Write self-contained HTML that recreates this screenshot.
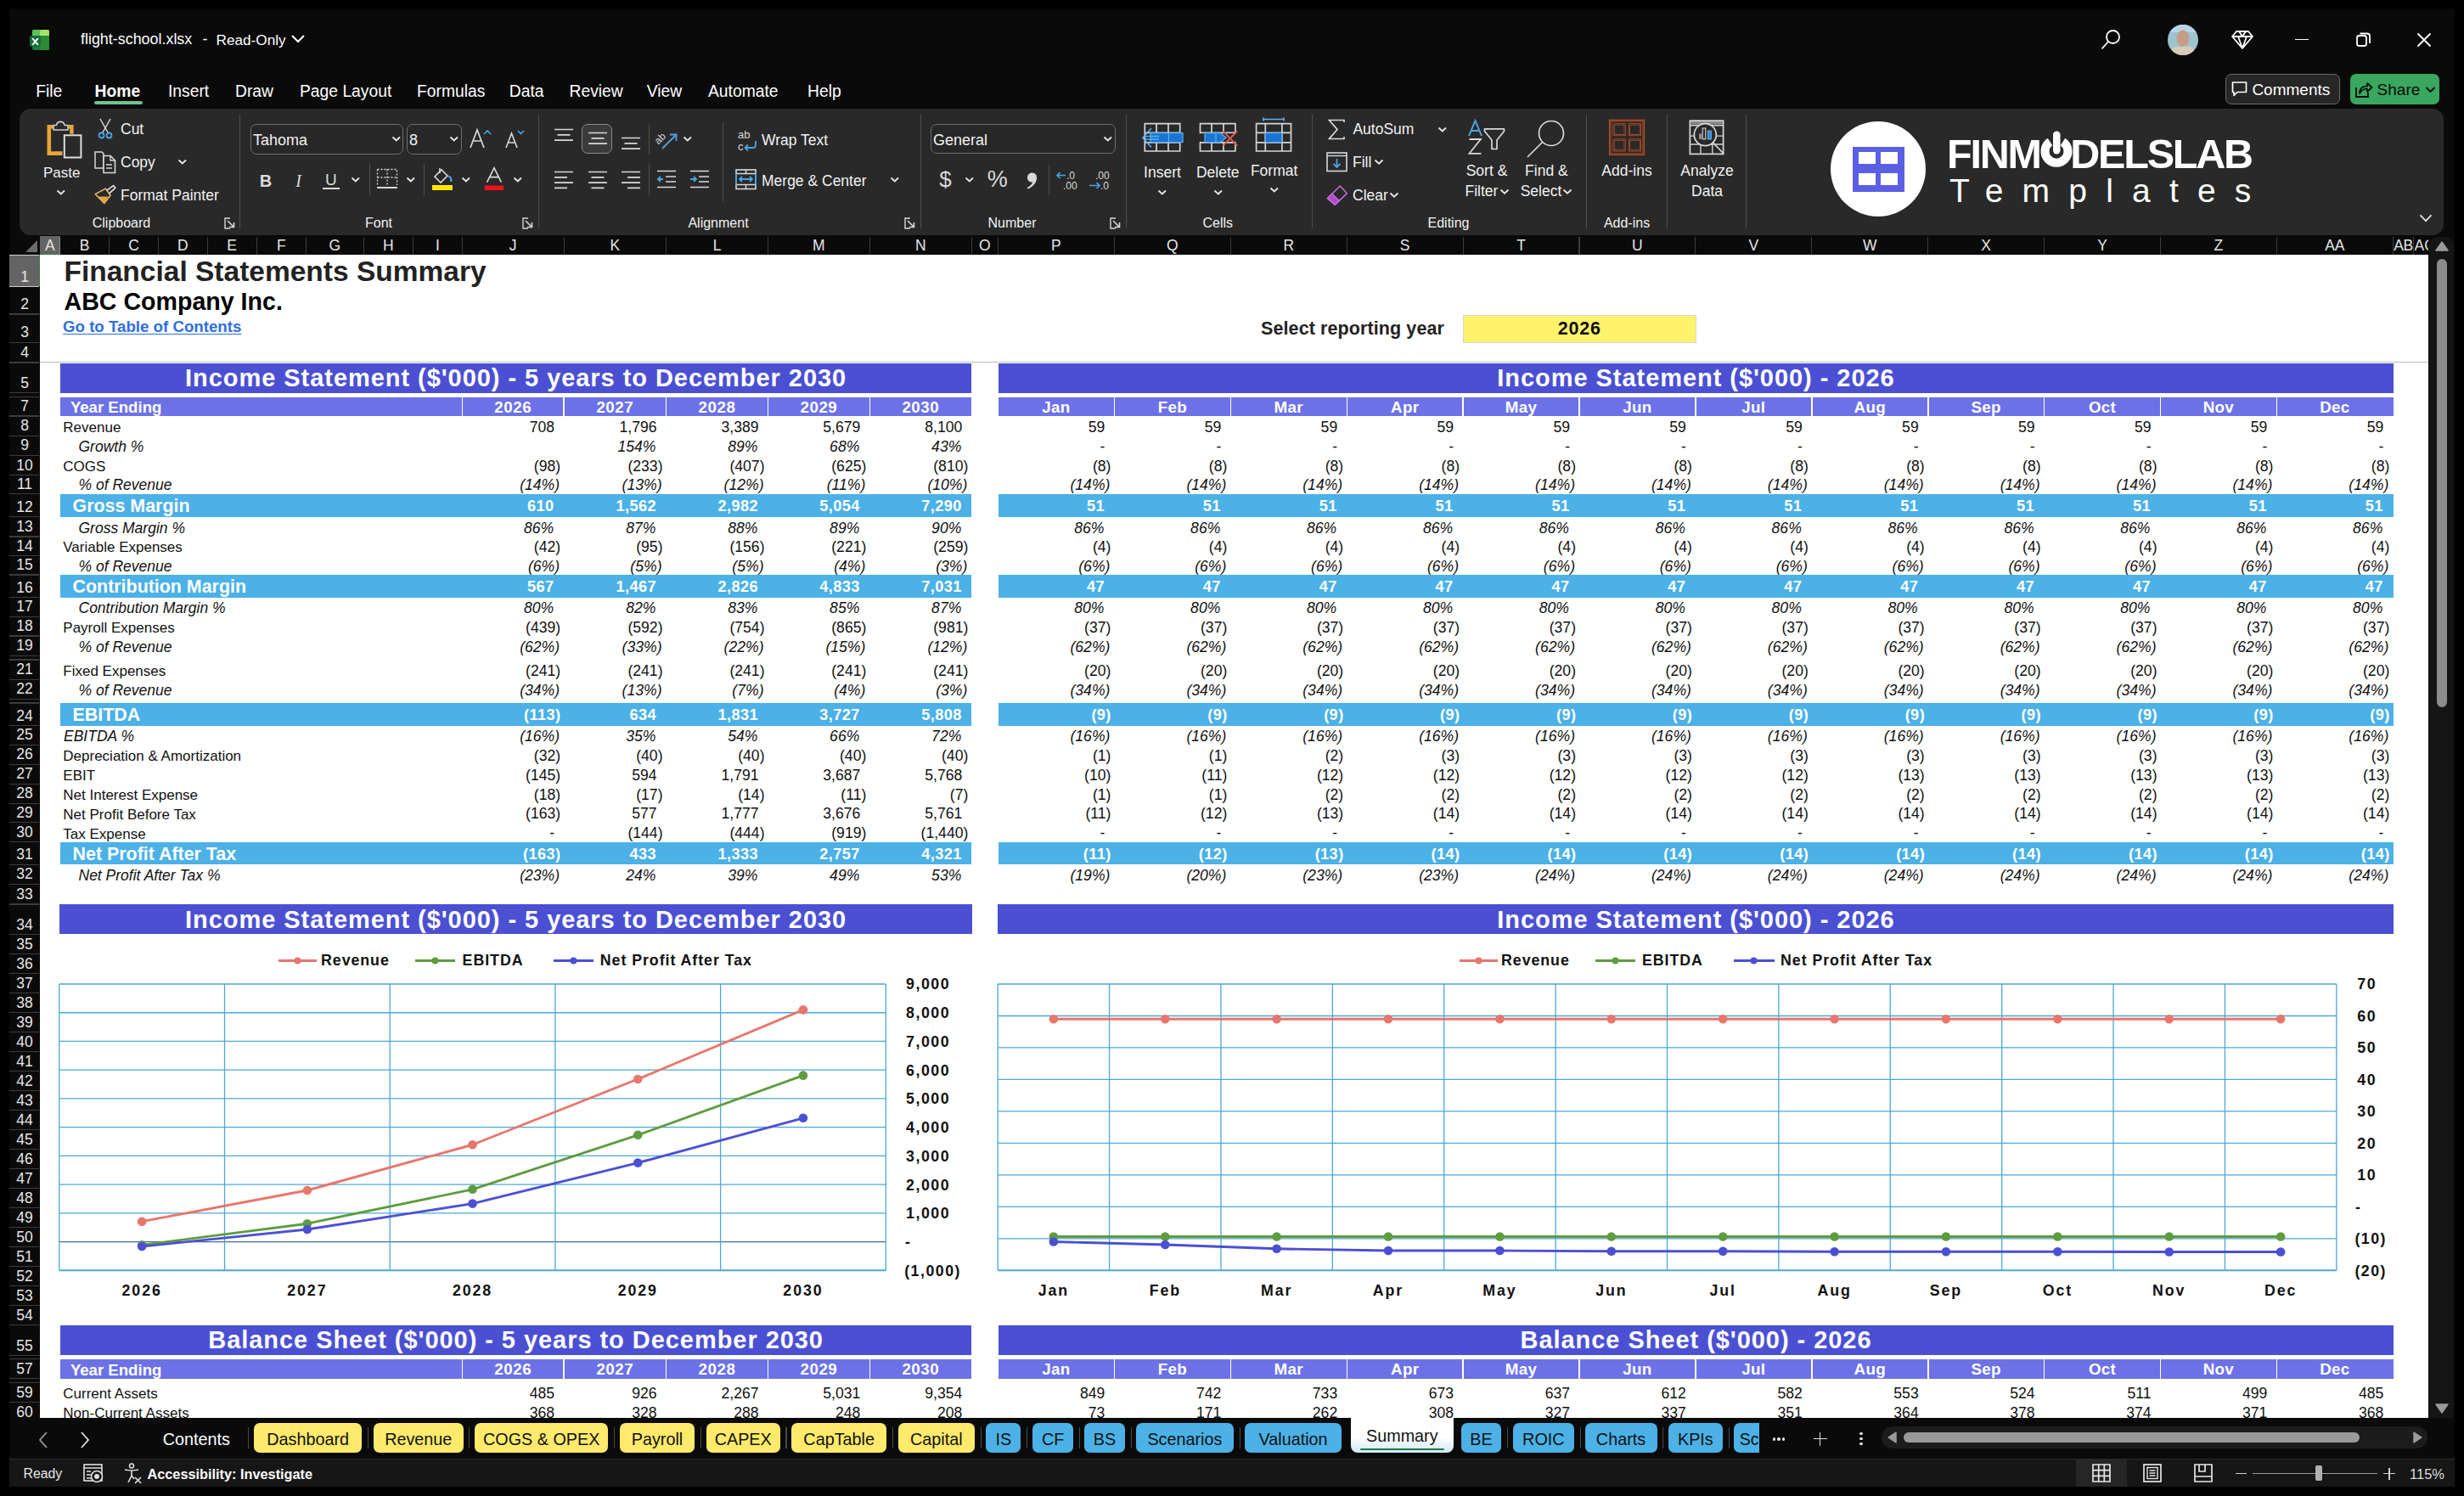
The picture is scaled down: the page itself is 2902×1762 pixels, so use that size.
<!DOCTYPE html><html><head><meta charset="utf-8"><style>
html,body{margin:0;padding:0;width:2902px;height:1762px;overflow:hidden;background:#000;}
.t{position:absolute;white-space:nowrap;line-height:1;font-family:"Liberation Sans",sans-serif;}
.r{position:absolute;}
</style></head><body>
<div class="r" style="left:11.00px;top:11.00px;width:2880.00px;height:1740.00px;background:#0a0a0a;"></div>
<svg class="r" style="left:33px;top:33px" width="28" height="28" viewBox="0 0 28 28">
<rect x="5" y="2" width="20" height="24" rx="2" fill="#1f7a3a"/>
<rect x="5" y="2" width="10" height="8" rx="1.5" fill="#5cc35a"/>
<rect x="14" y="2" width="11" height="8" rx="1.5" fill="#a7e06a"/>
<rect x="14" y="9" width="11" height="17" fill="#2b8a36"/>
<rect x="2" y="9" width="13" height="13" rx="2" fill="#166b3a"/>
<path d="M5.2 12.2 L11.8 19.8 M11.8 12.2 L5.2 19.8" stroke="#fff" stroke-width="2"/>
</svg>
<div class="t" style="top:38.35px;font-size:17.9px;color:#ffffff;left:95.00px;">flight-school.xlsx</div>
<div class="t" style="top:38.35px;font-size:17.9px;color:#ffffff;left:238.50px;">-</div>
<div class="t" style="top:38.94px;font-size:17.2px;color:#ffffff;left:254.50px;">Read-Only</div>
<svg class="r" style="left:342px;top:40px" width="18" height="12" viewBox="0 0 18 12"><path d="M2 2 L9 9 L16 2" stroke="#fff" stroke-width="2" fill="none"/></svg>
<svg class="r" style="left:2470px;top:30px" width="30" height="32" viewBox="0 0 30 32">
<circle cx="18.5" cy="13.5" r="7.5" stroke="#fff" stroke-width="1.8" fill="none"/>
<path d="M13 19 L5.5 27.5" stroke="#fff" stroke-width="1.8"/></svg>
<svg class="r" style="left:2552px;top:28px" width="38" height="38" viewBox="0 0 38 38">
<defs><clipPath id="av"><circle cx="19" cy="19" r="18"/></clipPath></defs>
<g clip-path="url(#av)"><rect width="38" height="38" fill="#9cc4cf"/><rect y="0" width="38" height="10" fill="#b8d3e6"/>
<ellipse cx="19" cy="17" rx="7.5" ry="9.5" fill="#c79c86"/><rect x="6" y="27" width="26" height="12" rx="5" fill="#d8cbb8"/></g></svg>
<svg class="r" style="left:2627px;top:34px" width="28" height="26" viewBox="0 0 28 26">
<path d="M7 3 H21 L26 9 L14 23 L2 9 Z M2 9 H26 M10 3 L14 9 L18 3 M9 9 L14 23 L19 9" stroke="#fff" stroke-width="1.8" fill="none" stroke-linejoin="round"/></svg>
<div class="r" style="left:2703.00px;top:45.50px;width:16.00px;height:1.80px;background:#ffffff;"></div>
<svg class="r" style="left:2773px;top:37px" width="22" height="20" viewBox="0 0 22 20">
<rect x="3" y="5" width="11" height="12" rx="2.5" stroke="#fff" stroke-width="1.8" fill="none"/>
<path d="M6.5 2.5 H15 A3 3 0 0 1 18 5.5 V14" stroke="#fff" stroke-width="1.8" fill="none"/></svg>
<svg class="r" style="left:2845px;top:37px" width="20" height="20" viewBox="0 0 20 20">
<path d="M2.5 2.5 L17.5 17.5 M17.5 2.5 L2.5 17.5" stroke="#fff" stroke-width="1.8"/></svg>
<div class="t" style="top:98.16px;font-size:19.3px;color:#ffffff;left:42.20px;">File</div>
<div class="t" style="top:98.16px;font-size:19.3px;color:#ffffff;font-weight:bold;left:111.60px;">Home</div>
<div class="t" style="top:98.16px;font-size:19.3px;color:#ffffff;left:198.00px;">Insert</div>
<div class="t" style="top:98.16px;font-size:19.3px;color:#ffffff;left:277.00px;">Draw</div>
<div class="t" style="top:98.16px;font-size:19.3px;color:#ffffff;left:353.00px;">Page Layout</div>
<div class="t" style="top:98.16px;font-size:19.3px;color:#ffffff;left:491.00px;">Formulas</div>
<div class="t" style="top:98.16px;font-size:19.3px;color:#ffffff;left:599.80px;">Data</div>
<div class="t" style="top:98.16px;font-size:19.3px;color:#ffffff;left:670.50px;">Review</div>
<div class="t" style="top:98.16px;font-size:19.3px;color:#ffffff;left:761.80px;">View</div>
<div class="t" style="top:98.16px;font-size:19.3px;color:#ffffff;left:834.00px;">Automate</div>
<div class="t" style="top:98.16px;font-size:19.3px;color:#ffffff;left:951.00px;">Help</div>
<div class="r" style="left:111.00px;top:119.00px;width:57.00px;height:4.00px;background:#6fc38f;border-radius:2px;"></div>
<div class="r" style="left:2621.30px;top:87.10px;width:134.70px;height:35.70px;background:#262626;border:1.3px solid #6a6a6a;border-radius:7px;box-sizing:border-box;"></div>
<svg class="r" style="left:2627px;top:95px" width="22" height="20" viewBox="0 0 22 20">
<path d="M2.5 2 H18.5 V13.5 H8 L4 17.5 V13.5 H2.5 Z" stroke="#fff" stroke-width="1.7" fill="none" stroke-linejoin="round"/></svg>
<div class="t" style="top:96.32px;font-size:19px;color:#ffffff;left:2652.40px;">Comments</div>
<div class="r" style="left:2768.10px;top:87.10px;width:104.70px;height:35.70px;background:#3aa75e;border-radius:7px;"></div>
<svg class="r" style="left:2772px;top:94px" width="24" height="22" viewBox="0 0 24 22">
<path d="M3 9 V20 H17 V15" stroke="#0a0a0a" stroke-width="1.8" fill="none"/>
<path d="M7 16 C7 10 11 7.5 16 7.5 V4 L21.5 9 L16 14 V10.5 C12 10.5 9.5 12 7 16 Z" stroke="#0a0a0a" stroke-width="1.7" fill="none" stroke-linejoin="round"/></svg>
<div class="t" style="top:96.32px;font-size:19px;color:#0a0a0a;left:2799.60px;">Share</div>
<svg class="r" style="left:2856px;top:101px" width="13" height="9" viewBox="0 0 13 9"><path d="M1.5 2 L6.5 7 L11.5 2" stroke="#0a0a0a" stroke-width="1.8" fill="none"/></svg>
<div class="r" style="left:23.30px;top:128.10px;width:2855.20px;height:148.90px;background:#292929;border-radius:13px;"></div>
<svg class="r" style="left:52px;top:138px" width="46" height="50" viewBox="0 0 46 50">
<path d="M10.5 11.2 H5.8 V42.6 H21.5" stroke="#e8a33a" stroke-width="4.6" fill="none"/>
<path d="M28.5 11.2 H32.4 V19.8" stroke="#e8a33a" stroke-width="4.4" fill="none"/>
<path d="M11 15 V9.5 H14.5 A4.8 4.8 0 0 1 24 9.5 H28 V15 Z" stroke="#cfcfcf" stroke-width="1.6" fill="#292929" stroke-linejoin="round"/>
<rect x="23.8" y="21.3" width="19.6" height="26.2" stroke="#dcdcdc" stroke-width="2" fill="#292929"/></svg>
<div class="t" style="top:194.91px;font-size:17px;color:#f2f2f2;left:51.00px;">Paste</div>
<svg class="r" style="left:65.8px;top:222.7px" width="11.5" height="7.7" viewBox="0 0 11.5 7.7"><path d="M1.5 1.5 L5.8 5.5 L10.0 1.5" stroke="#e6e6e6" stroke-width="1.9" fill="none"/></svg>
<svg class="r" style="left:114px;top:139px" width="20" height="26" viewBox="0 0 20 26">
<path d="M4 1 L13 17 M16 1 L7 17" stroke="#d9d9d9" stroke-width="1.5"/>
<circle cx="5.5" cy="20.5" r="3" stroke="#4aa3e0" stroke-width="1.8" fill="none"/>
<circle cx="14.5" cy="20.5" r="3" stroke="#4aa3e0" stroke-width="1.8" fill="none"/></svg>
<div class="t" style="top:144.19px;font-size:17.5px;color:#f2f2f2;left:142.00px;">Cut</div>
<svg class="r" style="left:111px;top:178px" width="27" height="27" viewBox="0 0 27 27">
<path d="M1 1 H9 L11 3 V20 H1 Z" stroke="#d9d9d9" stroke-width="1.5" fill="none"/>
<path d="M11 5.5 H19 L24.5 11 V25.5 H11 Z" stroke="#d9d9d9" stroke-width="1.6" fill="#292929"/>
<path d="M19 5.5 V11 H24.5 M14 16 H21 M14 20 H21" stroke="#d9d9d9" stroke-width="1.3" fill="none"/></svg>
<div class="t" style="top:182.69px;font-size:17.5px;color:#f2f2f2;left:142.00px;">Copy</div>
<svg class="r" style="left:209.2px;top:187.2px" width="11.5" height="7.7" viewBox="0 0 11.5 7.7"><path d="M1.5 1.5 L5.8 5.5 L10.0 1.5" stroke="#e6e6e6" stroke-width="1.9" fill="none"/></svg>
<svg class="r" style="left:110px;top:216px" width="28" height="26" viewBox="0 0 28 26">
<path d="M2.2 12.6 L14.4 6.1 L20.1 14.2 L12.8 23.6 Z" stroke="#e8c070" stroke-width="1.5" fill="none" stroke-linejoin="round"/>
<path d="M6 15.5 L17.5 15.5 L12.8 23.6 Z" fill="#e8a33a"/>
<path d="M15.5 8.5 L23.5 2.6 L25.8 5.4 L18.4 12" stroke="#d9d9d9" stroke-width="1.7" fill="none" stroke-linejoin="round"/></svg>
<div class="t" style="top:222.49px;font-size:17.5px;color:#f2f2f2;left:142.00px;">Format Painter</div>
<div class="t" style="top:254.56px;font-size:16px;color:#f2f2f2;left:-1357.00px;width:3000px;text-align:center;">Clipboard</div>
<svg class="r" style="left:264px;top:256px" width="14" height="14" viewBox="0 0 14 14">
<path d="M1 7 V1 H7" stroke="#d8d8d8" stroke-width="1.4" fill="none"/><path d="M1 1 V13 H13 V7" stroke="none" fill="none"/>
<path d="M4 4 L11.5 11.5 M6 11.5 H11.5 V6" stroke="#d8d8d8" stroke-width="1.6" fill="none"/><path d="M1 7 V13 H7" stroke="#d8d8d8" stroke-width="1.4" fill="none"/></svg>
<div class="r" style="left:282.00px;top:135.00px;width:1.00px;height:134.00px;background:#4f4f4f;"></div>
<div class="r" style="left:295.20px;top:146.00px;width:180.30px;height:35.80px;background:#272727;border:1.3px solid #6e6e6e;border-radius:7px;box-sizing:border-box;"></div>
<div class="t" style="top:155.76px;font-size:18px;color:#f2f2f2;left:298.00px;">Tahoma</div>
<svg class="r" style="left:461.2px;top:160.2px" width="11.5" height="7.7" viewBox="0 0 11.5 7.7"><path d="M1.5 1.5 L5.8 5.5 L10.0 1.5" stroke="#e6e6e6" stroke-width="1.9" fill="none"/></svg>
<div class="r" style="left:479.00px;top:146.00px;width:64.80px;height:35.80px;background:#272727;border:1.3px solid #6e6e6e;border-radius:7px;box-sizing:border-box;"></div>
<div class="t" style="top:155.76px;font-size:18px;color:#f2f2f2;left:482.00px;">8</div>
<svg class="r" style="left:529.2px;top:160.2px" width="11.5" height="7.7" viewBox="0 0 11.5 7.7"><path d="M1.5 1.5 L5.8 5.5 L10.0 1.5" stroke="#e6e6e6" stroke-width="1.9" fill="none"/></svg>
<svg class="r" style="left:552px;top:150px" width="28" height="26" viewBox="0 0 28 26">
<path d="M2 24 L10 3 L18 24 M5 16 H15" stroke="#d9d9d9" stroke-width="1.7" fill="none"/>
<path d="M18 8 L22 4 L26 8" stroke="#4aa3e0" stroke-width="1.7" fill="none"/></svg>
<svg class="r" style="left:594px;top:150px" width="26" height="26" viewBox="0 0 26 26">
<path d="M2 24 L8.5 7 L15 24 M4.5 18 H12.5" stroke="#d9d9d9" stroke-width="1.6" fill="none"/>
<path d="M16 4 L19.5 7.5 L23 4" stroke="#4aa3e0" stroke-width="1.7" fill="none"/></svg>
<div class="t" style="top:203.07px;font-size:20px;color:#d9d9d9;font-weight:bold;left:-1187.00px;width:3000px;text-align:center;">B</div>
<div class="t" style="top:203.07px;font-size:20px;color:#d9d9d9;font-style:italic;left:-1148.50px;width:3000px;text-align:center;font-family:'Liberation Serif',serif;">I</div>
<div class="t" style="top:201.92px;font-size:19px;color:#d9d9d9;left:-1110.20px;width:3000px;text-align:center;">U</div>
<div class="r" style="left:380.00px;top:221.00px;width:20.00px;height:1.70px;background:#d9d9d9;"></div>
<svg class="r" style="left:413.2px;top:208.2px" width="11.5" height="7.7" viewBox="0 0 11.5 7.7"><path d="M1.5 1.5 L5.8 5.5 L10.0 1.5" stroke="#e6e6e6" stroke-width="1.9" fill="none"/></svg>
<div class="r" style="left:434.50px;top:193.00px;width:1.00px;height:37.00px;background:#4f4f4f;"></div>
<svg class="r" style="left:443px;top:198px" width="26" height="26" viewBox="0 0 26 26">
<path d="M1.5 1.5 H24.5 V20 M1.5 1.5 V20 M13 1.5 V20 M1.5 11 H24.5" stroke="#d9d9d9" stroke-width="1.3" stroke-dasharray="2 2" fill="none"/>
<path d="M1 23 H25" stroke="#d9d9d9" stroke-width="2"/></svg>
<svg class="r" style="left:478.2px;top:208.2px" width="11.5" height="7.7" viewBox="0 0 11.5 7.7"><path d="M1.5 1.5 L5.8 5.5 L10.0 1.5" stroke="#e6e6e6" stroke-width="1.9" fill="none"/></svg>
<div class="r" style="left:499.30px;top:193.00px;width:1.00px;height:37.00px;background:#4f4f4f;"></div>
<svg class="r" style="left:507px;top:196px" width="28" height="29" viewBox="0 0 28 29">
<path d="M5 12 L13 4 L20 11 L12 19 Z" stroke="#d9d9d9" stroke-width="1.6" fill="none"/>
<path d="M11 2 V8" stroke="#d9d9d9" stroke-width="1.6"/>
<path d="M20 11 C24 12 25 15 24 18" stroke="#4aa3e0" stroke-width="2.2" fill="none"/>
<rect x="2" y="22" width="24" height="6" fill="#ffe600"/></svg>
<svg class="r" style="left:543.2px;top:208.2px" width="11.5" height="7.7" viewBox="0 0 11.5 7.7"><path d="M1.5 1.5 L5.8 5.5 L10.0 1.5" stroke="#e6e6e6" stroke-width="1.9" fill="none"/></svg>
<svg class="r" style="left:568px;top:196px" width="28" height="29" viewBox="0 0 28 31">
<path d="M5 20 L14 2 L23 20 M8.5 13.5 H19.5" stroke="#d9d9d9" stroke-width="1.7" fill="none"/>
<rect x="2" y="24" width="24" height="6" fill="#e8141b"/></svg>
<svg class="r" style="left:604.2px;top:208.2px" width="11.5" height="7.7" viewBox="0 0 11.5 7.7"><path d="M1.5 1.5 L5.8 5.5 L10.0 1.5" stroke="#e6e6e6" stroke-width="1.9" fill="none"/></svg>
<div class="t" style="top:254.56px;font-size:16px;color:#f2f2f2;left:-1054.00px;width:3000px;text-align:center;">Font</div>
<svg class="r" style="left:615px;top:256px" width="14" height="14" viewBox="0 0 14 14">
<path d="M1 7 V1 H7" stroke="#d8d8d8" stroke-width="1.4" fill="none"/><path d="M1 1 V13 H13 V7" stroke="none" fill="none"/>
<path d="M4 4 L11.5 11.5 M6 11.5 H11.5 V6" stroke="#d8d8d8" stroke-width="1.6" fill="none"/><path d="M1 7 V13 H7" stroke="#d8d8d8" stroke-width="1.4" fill="none"/></svg>
<div class="r" style="left:633.60px;top:135.00px;width:1.00px;height:134.00px;background:#4f4f4f;"></div>
<svg class="r" style="left:652px;top:151px" width="24" height="17" viewBox="0 0 24 17"><path d="M1.0 1.5 H23.0 M4.5 7.8 H19.5 M1.0 14.1 H23.0 " stroke="#d9d9d9" stroke-width="1.7" fill="none"/></svg>
<div class="r" style="left:685.30px;top:146.20px;width:35.30px;height:35.30px;background:#3b3b3b;border:1.3px solid #8a8a8a;border-radius:7px;box-sizing:border-box;"></div>
<svg class="r" style="left:692px;top:155px" width="24" height="17" viewBox="0 0 24 17"><path d="M1.0 1.5 H23.0 M4.5 7.8 H19.5 M1.0 14.1 H23.0 " stroke="#d9d9d9" stroke-width="1.7" fill="none"/></svg>
<svg class="r" style="left:731px;top:161px" width="24" height="17" viewBox="0 0 24 17"><path d="M1.0 1.5 H23.0 M4.5 7.8 H19.5 M1.0 14.1 H23.0 " stroke="#d9d9d9" stroke-width="1.7" fill="none"/></svg>
<div class="r" style="left:763.50px;top:146.00px;width:1.00px;height:36.00px;background:#4f4f4f;"></div>
<svg class="r" style="left:771px;top:151px" width="30" height="26" viewBox="0 0 30 26">
<text x="0" y="15" transform="rotate(-45 8 12)" font-family="Liberation Sans" font-size="12" fill="#d9d9d9">ab</text>
<path d="M9 24 L25 8 M18 7.5 H25.5 V15" stroke="#4aa3e0" stroke-width="1.8" fill="none"/></svg>
<svg class="r" style="left:804.2px;top:160.2px" width="11.5" height="7.7" viewBox="0 0 11.5 7.7"><path d="M1.5 1.5 L5.8 5.5 L10.0 1.5" stroke="#e6e6e6" stroke-width="1.9" fill="none"/></svg>
<div class="r" style="left:851.20px;top:144.00px;width:1.00px;height:93.00px;background:#4f4f4f;"></div>
<svg class="r" style="left:868px;top:151px" width="26" height="30" viewBox="0 0 26 30">
<text x="1" y="12" font-family="Liberation Sans" font-size="13" fill="#d9d9d9">ab</text>
<text x="1" y="26" font-family="Liberation Sans" font-size="13" fill="#d9d9d9">c</text>
<path d="M22 15 V20 A3 3 0 0 1 19 23 H10 M13 19.5 L9.5 23 L13 26.5" stroke="#4aa3e0" stroke-width="1.8" fill="none"/></svg>
<div class="t" style="top:156.69px;font-size:17.5px;color:#f2f2f2;left:897.00px;">Wrap Text</div>
<svg class="r" style="left:652px;top:201px" width="24" height="23" viewBox="0 0 24 23"><path d="M1.0 1.5 H23.0 M1.0 7.8 H16.0 M1.0 14.1 H23.0 M1.0 20.4 H16.0 " stroke="#d9d9d9" stroke-width="1.7" fill="none"/></svg>
<svg class="r" style="left:692px;top:201px" width="24" height="23" viewBox="0 0 24 23"><path d="M1.0 1.5 H23.0 M4.5 7.8 H19.5 M1.0 14.1 H23.0 M4.5 20.4 H19.5 " stroke="#d9d9d9" stroke-width="1.7" fill="none"/></svg>
<svg class="r" style="left:731px;top:201px" width="24" height="23" viewBox="0 0 24 23"><path d="M1.0 1.5 H23.0 M8.0 7.8 H23.0 M1.0 14.1 H23.0 M8.0 20.4 H23.0 " stroke="#d9d9d9" stroke-width="1.7" fill="none"/></svg>
<div class="r" style="left:763.50px;top:193.00px;width:1.00px;height:37.00px;background:#4f4f4f;"></div>
<svg class="r" style="left:773px;top:200px" width="25" height="22" viewBox="0 0 25 22">
<path d="M1 1.5 H23 M11 8 H23 M11 14 H23 M1 20.5 H23" stroke="#d9d9d9" stroke-width="1.7"/>
<path d="M8 11 H2 M5 8 L2 11 L5 14" stroke="#4aa3e0" stroke-width="1.8" fill="none"/></svg>
<svg class="r" style="left:812px;top:200px" width="25" height="22" viewBox="0 0 25 22">
<path d="M1 1.5 H23 M11 8 H23 M11 14 H23 M1 20.5 H23" stroke="#d9d9d9" stroke-width="1.7"/>
<path d="M1 11 H8 M5 8 L8 11 L5 14" stroke="#4aa3e0" stroke-width="1.8" fill="none"/></svg>
<svg class="r" style="left:866px;top:199px" width="25" height="25" viewBox="0 0 25 25">
<rect x="1" y="1" width="23" height="22.5" stroke="#d9d9d9" stroke-width="1.6" fill="none"/>
<path d="M1 5.5 H24 M1 18.5 H24 M12.5 1 V5.5 M12.5 18.5 V23.5" stroke="#d9d9d9" stroke-width="1.5"/>
<path d="M1 5.5 V18.5 M24 5.5 V18.5" stroke="#4aa3e0" stroke-width="2"/>
<path d="M5 12 H20 M8 9 L5 12 L8 15 M17 9 L20 12 L17 15" stroke="#4aa3e0" stroke-width="1.8" fill="none"/></svg>
<div class="t" style="top:204.69px;font-size:17.5px;color:#f2f2f2;left:897.00px;">Merge &amp; Center</div>
<svg class="r" style="left:1048.0px;top:208.2px" width="11.5" height="7.7" viewBox="0 0 11.5 7.7"><path d="M1.5 1.5 L5.8 5.5 L10.0 1.5" stroke="#e6e6e6" stroke-width="1.9" fill="none"/></svg>
<div class="t" style="top:254.56px;font-size:16px;color:#f2f2f2;left:-654.00px;width:3000px;text-align:center;">Alignment</div>
<svg class="r" style="left:1065px;top:256px" width="14" height="14" viewBox="0 0 14 14">
<path d="M1 7 V1 H7" stroke="#d8d8d8" stroke-width="1.4" fill="none"/><path d="M1 1 V13 H13 V7" stroke="none" fill="none"/>
<path d="M4 4 L11.5 11.5 M6 11.5 H11.5 V6" stroke="#d8d8d8" stroke-width="1.6" fill="none"/><path d="M1 7 V13 H7" stroke="#d8d8d8" stroke-width="1.4" fill="none"/></svg>
<div class="r" style="left:1083.50px;top:135.00px;width:1.00px;height:134.00px;background:#4f4f4f;"></div>
<div class="r" style="left:1096.20px;top:146.20px;width:217.40px;height:35.30px;background:#272727;border:1.3px solid #6e6e6e;border-radius:7px;box-sizing:border-box;"></div>
<div class="t" style="top:155.76px;font-size:18px;color:#f2f2f2;left:1099.00px;">General</div>
<svg class="r" style="left:1299.2px;top:160.2px" width="11.5" height="7.7" viewBox="0 0 11.5 7.7"><path d="M1.5 1.5 L5.8 5.5 L10.0 1.5" stroke="#e6e6e6" stroke-width="1.9" fill="none"/></svg>
<div class="t" style="top:198.49px;font-size:26px;color:#d9d9d9;left:-386.60px;width:3000px;text-align:center;">$</div>
<svg class="r" style="left:1136.2px;top:208.2px" width="11.5" height="7.7" viewBox="0 0 11.5 7.7"><path d="M1.5 1.5 L5.8 5.5 L10.0 1.5" stroke="#e6e6e6" stroke-width="1.9" fill="none"/></svg>
<div class="t" style="top:198.14px;font-size:27px;color:#d9d9d9;left:-325.20px;width:3000px;text-align:center;">%</div>
<svg class="r" style="left:1206px;top:202px" width="18" height="22" viewBox="0 0 18 22"><path d="M9.5 1.5 C13.5 1.5 15.5 4.5 15 8.5 C14.3 14 10 18.5 4.5 20.5 L3.8 19 C7.5 17 9.8 14.5 10.3 12.5 C6.5 12.8 4 10.5 4 7.2 C4 3.8 6.3 1.5 9.5 1.5 Z" fill="#d9d9d9"/></svg>
<div class="r" style="left:1235.40px;top:194.00px;width:1.00px;height:36.00px;background:#4f4f4f;"></div>
<svg class="r" style="left:1243px;top:200px" width="27" height="25" viewBox="0 0 27 25">
<text x="13" y="11" font-family="Liberation Sans" font-size="12" fill="#d9d9d9">.0</text>
<text x="9" y="23" font-family="Liberation Sans" font-size="12" fill="#d9d9d9">.00</text>
<path d="M12 6.5 H2 M5.5 3 L2 6.5 L5.5 10" stroke="#4aa3e0" stroke-width="1.7" fill="none"/></svg>
<svg class="r" style="left:1282px;top:200px" width="28" height="25" viewBox="0 0 28 25">
<text x="8" y="11" font-family="Liberation Sans" font-size="12" fill="#d9d9d9">.00</text>
<text x="14" y="23" font-family="Liberation Sans" font-size="12" fill="#d9d9d9">.0</text>
<path d="M1 18.5 H13 M9.5 15 L13 18.5 L9.5 22" stroke="#4aa3e0" stroke-width="1.7" fill="none"/></svg>
<div class="t" style="top:254.56px;font-size:16px;color:#f2f2f2;left:-308.00px;width:3000px;text-align:center;">Number</div>
<svg class="r" style="left:1307px;top:256px" width="14" height="14" viewBox="0 0 14 14">
<path d="M1 7 V1 H7" stroke="#d8d8d8" stroke-width="1.4" fill="none"/><path d="M1 1 V13 H13 V7" stroke="none" fill="none"/>
<path d="M4 4 L11.5 11.5 M6 11.5 H11.5 V6" stroke="#d8d8d8" stroke-width="1.6" fill="none"/><path d="M1 7 V13 H7" stroke="#d8d8d8" stroke-width="1.4" fill="none"/></svg>
<div class="r" style="left:1325.50px;top:135.00px;width:1.00px;height:134.00px;background:#4f4f4f;"></div>
<svg class="r" style="left:1340px;top:138px" width="190" height="44" viewBox="1340 138 190 44">
<path d="M1348.3 145.7 H1389.7 V178 H1348.3 Z M1348.3 156.3 H1389.7 M1348.3 167.8 H1389.7 M1362 145.7 V178 M1376 145.7 V178" stroke="#d6d6d6" stroke-width="1.7" fill="none"/>
<rect x="1355" y="156.6" width="38" height="11" fill="#1b74d2" stroke="#5cb2f2" stroke-width="1.2"/>
<path d="M1376.5 156.6 V167.6" stroke="#5cb2f2" stroke-width="1.2"/>
<path d="M1365 160.5 H1349 M1365 164 H1349" stroke="#5cb2f2" stroke-width="1.3"/>
<path d="M1356 151 L1346 162.2 L1356 173.5" stroke="#5cb2f2" stroke-width="1.7" fill="none"/>
<path d="M1413.5 145.7 H1454.9 V178 H1413.5 Z M1413.5 156.3 H1454.9 M1413.5 167.8 H1454.9 M1427 145.7 V178 M1441 145.7 V178" stroke="#d6d6d6" stroke-width="1.7" fill="none"/>
<rect x="1410" y="157.3" width="50" height="9.6" fill="#292929"/>
<path d="M1419 156.6 H1437 L1444.2 162.2 L1437 167.6 H1419 Z" fill="#1b74d2" stroke="#5cb2f2" stroke-width="1.2"/>
<path d="M1432 156.6 V167.6" stroke="#5cb2f2" stroke-width="1.2"/>
<path d="M1440.5 154.5 L1457 171.5 M1457 154.5 L1440.5 171.5" stroke="#e05a52" stroke-width="1.8"/>
<path d="M1488 140.5 H1512 M1488 138.5 V142.5 M1512 138.5 V142.5" stroke="#5cb2f2" stroke-width="1.7"/>
<path d="M1479.6 145.7 H1520.5 V178 H1479.6 Z M1479.6 156.3 H1520.5 M1479.6 167.8 H1520.5 M1490.3 145.7 V178 M1509.9 145.7 V178" stroke="#d6d6d6" stroke-width="1.7" fill="none"/>
<rect x="1490.3" y="156.6" width="19.6" height="11" fill="#1b74d2" stroke="#5cb2f2" stroke-width="1.2"/></svg>
<div class="t" style="top:195.19px;font-size:17.5px;color:#f2f2f2;left:-131.00px;width:3000px;text-align:center;">Insert</div>
<svg class="r" style="left:1363.2px;top:222.5px" width="11.5" height="7.7" viewBox="0 0 11.5 7.7"><path d="M1.5 1.5 L5.8 5.5 L10.0 1.5" stroke="#e6e6e6" stroke-width="1.9" fill="none"/></svg>
<div class="t" style="top:195.19px;font-size:17.5px;color:#f2f2f2;left:-65.80px;width:3000px;text-align:center;">Delete</div>
<svg class="r" style="left:1428.5px;top:222.5px" width="11.5" height="7.7" viewBox="0 0 11.5 7.7"><path d="M1.5 1.5 L5.8 5.5 L10.0 1.5" stroke="#e6e6e6" stroke-width="1.9" fill="none"/></svg>
<div class="t" style="top:193.19px;font-size:17.5px;color:#f2f2f2;left:0.60px;width:3000px;text-align:center;">Format</div>
<svg class="r" style="left:1494.8px;top:220.2px" width="11.5" height="7.7" viewBox="0 0 11.5 7.7"><path d="M1.5 1.5 L5.8 5.5 L10.0 1.5" stroke="#e6e6e6" stroke-width="1.9" fill="none"/></svg>
<div class="t" style="top:254.56px;font-size:16px;color:#f2f2f2;left:-65.80px;width:3000px;text-align:center;">Cells</div>
<div class="r" style="left:1544.80px;top:135.00px;width:1.00px;height:134.00px;background:#4f4f4f;"></div>
<svg class="r" style="left:1563px;top:140px" width="24" height="25" viewBox="0 0 24 25">
<path d="M20 4 V1.5 H2.5 L12 12.5 L2.5 23.5 H20 V21" stroke="#d9d9d9" stroke-width="1.7" fill="none"/></svg>
<div class="t" style="top:144.19px;font-size:17.5px;color:#f2f2f2;left:1593.40px;">AutoSum</div>
<svg class="r" style="left:1693.2px;top:148.8px" width="11.5" height="7.7" viewBox="0 0 11.5 7.7"><path d="M1.5 1.5 L5.8 5.5 L10.0 1.5" stroke="#e6e6e6" stroke-width="1.9" fill="none"/></svg>
<svg class="r" style="left:1562px;top:179px" width="26" height="24" viewBox="0 0 26 24">
<rect x="1" y="1" width="23" height="21.5" stroke="#d9d9d9" stroke-width="1.6" fill="none"/><path d="M1 4.5 H24" stroke="#d9d9d9" stroke-width="1.4"/>
<path d="M12.5 8 V18 M8.5 14 L12.5 18 L16.5 14" stroke="#4aa3e0" stroke-width="1.8" fill="none"/></svg>
<div class="t" style="top:183.19px;font-size:17.5px;color:#f2f2f2;left:1593.00px;">Fill</div>
<svg class="r" style="left:1618.0px;top:187.4px" width="12" height="8.0" viewBox="0 0 12 8.0"><path d="M1.5 1.5 L6.0 5.8 L10.5 1.5" stroke="#e6e6e6" stroke-width="1.9" fill="none"/></svg>
<svg class="r" style="left:1558px;top:214px" width="34" height="32" viewBox="1558 214 34 32">
<path d="M1563.5 233.5 L1578.3 219 L1586.3 227.8 L1572.2 241.2 Z" stroke="#c56ad8" stroke-width="1.6" fill="none" stroke-linejoin="round"/>
<path d="M1563.5 233.5 L1568.8 228.3 L1577.2 236.5 L1572.2 241.2 Z" fill="#b04ccc" stroke="#c56ad8" stroke-width="1.6" stroke-linejoin="round"/></svg>
<div class="t" style="top:221.69px;font-size:17.5px;color:#f2f2f2;left:1593.00px;">Clear</div>
<svg class="r" style="left:1636.0px;top:226.0px" width="12" height="8.0" viewBox="0 0 12 8.0"><path d="M1.5 1.5 L6.0 5.8 L10.5 1.5" stroke="#e6e6e6" stroke-width="1.9" fill="none"/></svg>
<svg class="r" style="left:1725px;top:138px" width="52" height="46" viewBox="1725 138 52 46">
<path d="M1730 160.2 L1737.5 142 L1745 160.2 M1732.7 154 H1742.3" stroke="#4aa3e0" stroke-width="2" fill="none"/>
<path d="M1730.5 164 H1744 L1730.5 180.8 H1744.5" stroke="#d9d9d9" stroke-width="1.8" fill="none"/>
<path d="M1748.5 151.8 H1771.5 V154.5 L1763 165 V175.5 H1757 V165 L1748.5 154.5 Z" stroke="#d9d9d9" stroke-width="1.7" fill="none" stroke-linejoin="round"/></svg>
<div class="t" style="top:193.19px;font-size:17.5px;color:#f2f2f2;left:251.00px;width:3000px;text-align:center;">Sort &amp;</div>
<div class="t" style="top:217.19px;font-size:17.5px;color:#f2f2f2;left:245.00px;width:3000px;text-align:center;">Filter</div>
<svg class="r" style="left:1766.0px;top:221.5px" width="12" height="8.0" viewBox="0 0 12 8.0"><path d="M1.5 1.5 L6.0 5.8 L10.5 1.5" stroke="#e6e6e6" stroke-width="1.9" fill="none"/></svg>
<svg class="r" style="left:1797px;top:140px" width="48" height="46" viewBox="0 0 48 46">
<circle cx="30" cy="17" r="14.5" stroke="#d9d9d9" stroke-width="1.7" fill="none"/>
<path d="M19.5 27.5 L2 45" stroke="#d9d9d9" stroke-width="1.7"/></svg>
<div class="t" style="top:193.19px;font-size:17.5px;color:#f2f2f2;left:321.40px;width:3000px;text-align:center;">Find &amp;</div>
<div class="t" style="top:217.19px;font-size:17.5px;color:#f2f2f2;left:315.00px;width:3000px;text-align:center;">Select</div>
<svg class="r" style="left:1840.0px;top:221.5px" width="12" height="8.0" viewBox="0 0 12 8.0"><path d="M1.5 1.5 L6.0 5.8 L10.5 1.5" stroke="#e6e6e6" stroke-width="1.9" fill="none"/></svg>
<div class="t" style="top:254.96px;font-size:16px;color:#f2f2f2;left:206.00px;width:3000px;text-align:center;">Editing</div>
<div class="r" style="left:1868.40px;top:135.00px;width:1.00px;height:134.00px;background:#4f4f4f;"></div>
<svg class="r" style="left:1890px;top:136px" width="52" height="52" viewBox="1890 136 52 52"><g stroke="#d65a2c" fill="none">
<rect x="1896.2" y="141.9" width="39.6" height="39.9" stroke-width="2.4"/>
<rect x="1900.5" y="146.4" width="13.1" height="12.7" stroke-width="2"/><rect x="1918.9" y="146.4" width="13.1" height="12.7" stroke-width="2"/>
<rect x="1900.5" y="164.5" width="13.1" height="12.9" stroke-width="2"/><rect x="1918.9" y="164.5" width="13.1" height="12.9" stroke-width="2"/></g>
<g stroke="#2a211e" stroke-width="0.7" fill="none"><rect x="1896.2" y="141.9" width="39.6" height="39.9"/>
<rect x="1900.5" y="146.4" width="13.1" height="12.7"/><rect x="1918.9" y="146.4" width="13.1" height="12.7"/>
<rect x="1900.5" y="164.5" width="13.1" height="12.9"/><rect x="1918.9" y="164.5" width="13.1" height="12.9"/></g></svg>
<div class="t" style="top:193.19px;font-size:17.5px;color:#f2f2f2;left:416.00px;width:3000px;text-align:center;">Add-ins</div>
<div class="t" style="top:254.96px;font-size:16px;color:#f2f2f2;left:416.00px;width:3000px;text-align:center;">Add-ins</div>
<div class="r" style="left:1963.40px;top:135.00px;width:1.00px;height:134.00px;background:#4f4f4f;"></div>
<svg class="r" style="left:1985px;top:138px" width="50" height="48" viewBox="1985 138 50 48">
<rect x="1990.4" y="142.2" width="39.2" height="39.2" stroke="#d9d9d9" stroke-width="1.7" fill="none"/>
<rect x="1991.2" y="143" width="37.6" height="3.6" fill="#8a8a8a"/>
<path d="M1990.4 147.8 H2029.6 M1990.4 160.1 H2029.6 M1990.4 170 H2029.6 M2003 170 V181.4 M2016.8 170 V181.4" stroke="#cfcfcf" stroke-width="1.4"/>
<circle cx="2008.3" cy="158.7" r="13" stroke="#d9d9d9" stroke-width="1.7" fill="#292929"/>
<path d="M2017.5 168 L2030 181" stroke="#d9d9d9" stroke-width="1.8"/>
<rect x="2001" y="157.5" width="3.2" height="6.3" fill="#8f8f8f"/><rect x="2005.2" y="151" width="3.6" height="12.8" fill="#292929" stroke="#d9d9d9" stroke-width="1.1"/><rect x="2011.5" y="154" width="3.8" height="10" fill="#2b8ae0" stroke="#7cc0f0" stroke-width="0.8"/></svg>
<div class="t" style="top:193.19px;font-size:17.5px;color:#f2f2f2;left:510.50px;width:3000px;text-align:center;">Analyze</div>
<div class="t" style="top:217.19px;font-size:17.5px;color:#f2f2f2;left:510.50px;width:3000px;text-align:center;">Data</div>
<div class="r" style="left:2056.40px;top:135.00px;width:1.00px;height:134.00px;background:#4f4f4f;"></div>
<svg class="r" style="left:2154px;top:141px" width="116" height="116" viewBox="0 0 116 116">
<circle cx="58" cy="58" r="56" fill="#ffffff"/>
<rect x="28" y="32" width="61" height="53" fill="#5b5fe3"/>
<rect x="35" y="38" width="20" height="14" fill="#fff"/><rect x="61" y="38" width="20" height="14" fill="#fff"/>
<rect x="35" y="63" width="20" height="14" fill="#fff"/><rect x="61" y="63" width="20" height="14" fill="#fff"/></svg>
<div class="t" style="top:156.64px;font-size:48.5px;color:#ffffff;font-weight:bold;letter-spacing:-2.2px;left:2293.00px;">FINMODELSLAB</div>
<div class="t" style="top:204.99px;font-size:39px;color:#ffffff;letter-spacing:22.2px;left:2296.00px;">Templates</div>
<div class="r" style="left:2403.00px;top:158.00px;width:37.00px;height:42.00px;background:#292929;"></div>
<svg class="r" style="left:2400px;top:150px" width="44" height="52" viewBox="0 0 44 52">
<path d="M14.5 17 A13.5 13.5 0 1 0 29.5 17" stroke="#fff" stroke-width="10" fill="none"/>
<rect x="18" y="4.5" width="8.5" height="27" rx="4.2" fill="#fff"/>
<rect x="15.5" y="10" width="13.5" height="4" fill="#292929" opacity="0"/></svg>
<svg class="r" style="left:2848.5px;top:251.8px" width="16" height="10.4" viewBox="0 0 16 10.4"><path d="M1.5 1.5 L8.0 8.2 L14.5 1.5" stroke="#e0e0e0" stroke-width="1.8" fill="none"/></svg>
<div class="r" style="left:11.00px;top:277.30px;width:2880.00px;height:23.10px;background:#0a0a0a;"></div>
<svg class="r" style="left:28px;top:282px" width="17" height="16" viewBox="0 0 17 16"><path d="M16 1 V15 H2 Z" fill="#6b6b6b"/></svg>
<div class="r" style="left:47.10px;top:277.80px;width:23.50px;height:22.60px;background:#646464;"></div>
<div class="r" style="left:47.10px;top:298.60px;width:24.00px;height:2.40px;background:#2f7d4e;"></div>
<div class="r" style="left:70.00px;top:279.00px;width:1.20px;height:21.40px;background:#8a8a8a;"></div>
<div class="t" style="top:281.19px;font-size:17.5px;color:#e6e6e6;left:-1441.15px;width:3000px;text-align:center;">A</div>
<div class="r" style="left:128.00px;top:279.00px;width:1.20px;height:21.40px;background:#3c3c3c;"></div>
<div class="t" style="top:281.19px;font-size:17.5px;color:#e6e6e6;left:-1400.40px;width:3000px;text-align:center;">B</div>
<div class="r" style="left:185.70px;top:279.00px;width:1.20px;height:21.40px;background:#3c3c3c;"></div>
<div class="t" style="top:281.19px;font-size:17.5px;color:#e6e6e6;left:-1342.55px;width:3000px;text-align:center;">C</div>
<div class="r" style="left:243.60px;top:279.00px;width:1.20px;height:21.40px;background:#3c3c3c;"></div>
<div class="t" style="top:281.19px;font-size:17.5px;color:#e6e6e6;left:-1284.75px;width:3000px;text-align:center;">D</div>
<div class="r" style="left:301.60px;top:279.00px;width:1.20px;height:21.40px;background:#3c3c3c;"></div>
<div class="t" style="top:281.19px;font-size:17.5px;color:#e6e6e6;left:-1226.80px;width:3000px;text-align:center;">E</div>
<div class="r" style="left:359.80px;top:279.00px;width:1.20px;height:21.40px;background:#3c3c3c;"></div>
<div class="t" style="top:281.19px;font-size:17.5px;color:#e6e6e6;left:-1168.70px;width:3000px;text-align:center;">F</div>
<div class="r" style="left:427.80px;top:279.00px;width:1.20px;height:21.40px;background:#3c3c3c;"></div>
<div class="t" style="top:281.19px;font-size:17.5px;color:#e6e6e6;left:-1105.60px;width:3000px;text-align:center;">G</div>
<div class="r" style="left:485.80px;top:279.00px;width:1.20px;height:21.40px;background:#3c3c3c;"></div>
<div class="t" style="top:281.19px;font-size:17.5px;color:#e6e6e6;left:-1042.60px;width:3000px;text-align:center;">H</div>
<div class="r" style="left:543.70px;top:279.00px;width:1.20px;height:21.40px;background:#3c3c3c;"></div>
<div class="t" style="top:281.19px;font-size:17.5px;color:#e6e6e6;left:-984.65px;width:3000px;text-align:center;">I</div>
<div class="r" style="left:663.50px;top:279.00px;width:1.20px;height:21.40px;background:#3c3c3c;"></div>
<div class="t" style="top:281.19px;font-size:17.5px;color:#e6e6e6;left:-895.80px;width:3000px;text-align:center;">J</div>
<div class="r" style="left:783.90px;top:279.00px;width:1.20px;height:21.40px;background:#3c3c3c;"></div>
<div class="t" style="top:281.19px;font-size:17.5px;color:#e6e6e6;left:-775.70px;width:3000px;text-align:center;">K</div>
<div class="r" style="left:903.90px;top:279.00px;width:1.20px;height:21.40px;background:#3c3c3c;"></div>
<div class="t" style="top:281.19px;font-size:17.5px;color:#e6e6e6;left:-655.50px;width:3000px;text-align:center;">L</div>
<div class="r" style="left:1023.70px;top:279.00px;width:1.20px;height:21.40px;background:#3c3c3c;"></div>
<div class="t" style="top:281.19px;font-size:17.5px;color:#e6e6e6;left:-535.60px;width:3000px;text-align:center;">M</div>
<div class="r" style="left:1143.70px;top:279.00px;width:1.20px;height:21.40px;background:#3c3c3c;"></div>
<div class="t" style="top:281.19px;font-size:17.5px;color:#e6e6e6;left:-415.70px;width:3000px;text-align:center;">N</div>
<div class="r" style="left:1174.90px;top:279.00px;width:1.20px;height:21.40px;background:#3c3c3c;"></div>
<div class="t" style="top:281.19px;font-size:17.5px;color:#e6e6e6;left:-340.10px;width:3000px;text-align:center;">O</div>
<div class="r" style="left:1311.80px;top:279.00px;width:1.20px;height:21.40px;background:#3c3c3c;"></div>
<div class="t" style="top:281.19px;font-size:17.5px;color:#e6e6e6;left:-256.05px;width:3000px;text-align:center;">P</div>
<div class="r" style="left:1448.70px;top:279.00px;width:1.20px;height:21.40px;background:#3c3c3c;"></div>
<div class="t" style="top:281.19px;font-size:17.5px;color:#e6e6e6;left:-119.15px;width:3000px;text-align:center;">Q</div>
<div class="r" style="left:1585.60px;top:279.00px;width:1.20px;height:21.40px;background:#3c3c3c;"></div>
<div class="t" style="top:281.19px;font-size:17.5px;color:#e6e6e6;left:17.75px;width:3000px;text-align:center;">R</div>
<div class="r" style="left:1722.50px;top:279.00px;width:1.20px;height:21.40px;background:#3c3c3c;"></div>
<div class="t" style="top:281.19px;font-size:17.5px;color:#e6e6e6;left:154.65px;width:3000px;text-align:center;">S</div>
<div class="r" style="left:1859.40px;top:279.00px;width:1.20px;height:21.40px;background:#3c3c3c;"></div>
<div class="t" style="top:281.19px;font-size:17.5px;color:#e6e6e6;left:291.55px;width:3000px;text-align:center;">T</div>
<div class="r" style="left:1996.30px;top:279.00px;width:1.20px;height:21.40px;background:#3c3c3c;"></div>
<div class="t" style="top:281.19px;font-size:17.5px;color:#e6e6e6;left:428.45px;width:3000px;text-align:center;">U</div>
<div class="r" style="left:2133.20px;top:279.00px;width:1.20px;height:21.40px;background:#3c3c3c;"></div>
<div class="t" style="top:281.19px;font-size:17.5px;color:#e6e6e6;left:565.35px;width:3000px;text-align:center;">V</div>
<div class="r" style="left:2270.10px;top:279.00px;width:1.20px;height:21.40px;background:#3c3c3c;"></div>
<div class="t" style="top:281.19px;font-size:17.5px;color:#e6e6e6;left:702.25px;width:3000px;text-align:center;">W</div>
<div class="r" style="left:2407.00px;top:279.00px;width:1.20px;height:21.40px;background:#3c3c3c;"></div>
<div class="t" style="top:281.19px;font-size:17.5px;color:#e6e6e6;left:839.15px;width:3000px;text-align:center;">X</div>
<div class="r" style="left:2543.90px;top:279.00px;width:1.20px;height:21.40px;background:#3c3c3c;"></div>
<div class="t" style="top:281.19px;font-size:17.5px;color:#e6e6e6;left:976.05px;width:3000px;text-align:center;">Y</div>
<div class="r" style="left:2680.80px;top:279.00px;width:1.20px;height:21.40px;background:#3c3c3c;"></div>
<div class="t" style="top:281.19px;font-size:17.5px;color:#e6e6e6;left:1112.95px;width:3000px;text-align:center;">Z</div>
<div class="r" style="left:2817.70px;top:279.00px;width:1.20px;height:21.40px;background:#3c3c3c;"></div>
<div class="t" style="top:281.19px;font-size:17.5px;color:#e6e6e6;left:1249.85px;width:3000px;text-align:center;">AA</div>
<div class="r" style="left:2842.00px;top:279.00px;width:1.20px;height:21.40px;background:#3c3c3c;"></div>
<div class="t" style="top:281.19px;font-size:17.5px;color:#e6e6e6;left:1330.45px;width:3000px;text-align:center;letter-spacing:-0.5px;">AB</div>
<div class="t" style="top:281.19px;font-size:17.5px;color:#e0e0e0;left:2843.60px;width:17px;overflow:hidden;">AC</div>
<div class="r" style="left:11.00px;top:300.40px;width:36.10px;height:1369.80px;background:#0a0a0a;"></div>
<div class="r" style="left:11.00px;top:300.40px;width:35.00px;height:37.00px;background:#646464;"></div>
<div class="r" style="left:45.50px;top:300.40px;width:2.50px;height:37.00px;background:#2f7d4e;"></div>
<div class="r" style="left:11.00px;top:299.90px;width:35.00px;height:1.30px;background:#cfcfcf;"></div>
<div class="r" style="left:11.00px;top:336.80px;width:35.00px;height:1.30px;background:#cfcfcf;"></div>
<div class="t" style="top:317.59px;font-size:17.5px;color:#e6e6e6;left:-1471.00px;width:3000px;text-align:center;">1</div>
<div class="r" style="left:11.00px;top:369.40px;width:35.00px;height:1.20px;background:#3c3c3c;"></div>
<div class="t" style="top:350.19px;font-size:17.5px;color:#e6e6e6;left:-1471.00px;width:3000px;text-align:center;">2</div>
<div class="r" style="left:11.00px;top:402.60px;width:35.00px;height:1.20px;background:#3c3c3c;"></div>
<div class="t" style="top:383.39px;font-size:17.5px;color:#e6e6e6;left:-1471.00px;width:3000px;text-align:center;">3</div>
<div class="r" style="left:11.00px;top:426.40px;width:35.00px;height:1.20px;background:#3c3c3c;"></div>
<div class="t" style="top:407.19px;font-size:17.5px;color:#e6e6e6;left:-1471.00px;width:3000px;text-align:center;">4</div>
<div class="r" style="left:11.00px;top:462.00px;width:35.00px;height:1.20px;background:#3c3c3c;"></div>
<div class="t" style="top:442.79px;font-size:17.5px;color:#e6e6e6;left:-1471.00px;width:3000px;text-align:center;">5</div>
<div class="r" style="left:11.00px;top:467.00px;width:35.00px;height:1.20px;background:#3c3c3c;"></div>
<div class="r" style="left:11.00px;top:489.40px;width:35.00px;height:1.20px;background:#3c3c3c;"></div>
<div class="t" style="top:470.19px;font-size:17.5px;color:#e6e6e6;left:-1471.00px;width:3000px;text-align:center;">7</div>
<div class="r" style="left:11.00px;top:512.70px;width:35.00px;height:1.20px;background:#3c3c3c;"></div>
<div class="t" style="top:493.49px;font-size:17.5px;color:#e6e6e6;left:-1471.00px;width:3000px;text-align:center;">8</div>
<div class="r" style="left:11.00px;top:535.50px;width:35.00px;height:1.20px;background:#3c3c3c;"></div>
<div class="t" style="top:516.29px;font-size:17.5px;color:#e6e6e6;left:-1471.00px;width:3000px;text-align:center;">9</div>
<div class="r" style="left:11.00px;top:558.80px;width:35.00px;height:1.20px;background:#3c3c3c;"></div>
<div class="t" style="top:539.59px;font-size:17.5px;color:#e6e6e6;left:-1471.00px;width:3000px;text-align:center;">10</div>
<div class="r" style="left:11.00px;top:581.30px;width:35.00px;height:1.20px;background:#3c3c3c;"></div>
<div class="t" style="top:562.09px;font-size:17.5px;color:#e6e6e6;left:-1471.00px;width:3000px;text-align:center;">11</div>
<div class="r" style="left:11.00px;top:608.10px;width:35.00px;height:1.20px;background:#3c3c3c;"></div>
<div class="t" style="top:588.89px;font-size:17.5px;color:#e6e6e6;left:-1471.00px;width:3000px;text-align:center;">12</div>
<div class="r" style="left:11.00px;top:631.40px;width:35.00px;height:1.20px;background:#3c3c3c;"></div>
<div class="t" style="top:612.19px;font-size:17.5px;color:#e6e6e6;left:-1471.00px;width:3000px;text-align:center;">13</div>
<div class="r" style="left:11.00px;top:653.80px;width:35.00px;height:1.20px;background:#3c3c3c;"></div>
<div class="t" style="top:634.59px;font-size:17.5px;color:#e6e6e6;left:-1471.00px;width:3000px;text-align:center;">14</div>
<div class="r" style="left:11.00px;top:676.40px;width:35.00px;height:1.20px;background:#3c3c3c;"></div>
<div class="t" style="top:657.19px;font-size:17.5px;color:#e6e6e6;left:-1471.00px;width:3000px;text-align:center;">15</div>
<div class="r" style="left:11.00px;top:703.00px;width:35.00px;height:1.20px;background:#3c3c3c;"></div>
<div class="t" style="top:683.79px;font-size:17.5px;color:#e6e6e6;left:-1471.00px;width:3000px;text-align:center;">16</div>
<div class="r" style="left:11.00px;top:725.70px;width:35.00px;height:1.20px;background:#3c3c3c;"></div>
<div class="t" style="top:706.49px;font-size:17.5px;color:#e6e6e6;left:-1471.00px;width:3000px;text-align:center;">17</div>
<div class="r" style="left:11.00px;top:748.40px;width:35.00px;height:1.20px;background:#3c3c3c;"></div>
<div class="t" style="top:729.19px;font-size:17.5px;color:#e6e6e6;left:-1471.00px;width:3000px;text-align:center;">18</div>
<div class="r" style="left:11.00px;top:771.50px;width:35.00px;height:1.20px;background:#3c3c3c;"></div>
<div class="t" style="top:752.29px;font-size:17.5px;color:#e6e6e6;left:-1471.00px;width:3000px;text-align:center;">19</div>
<div class="r" style="left:11.00px;top:776.40px;width:35.00px;height:1.20px;background:#3c3c3c;"></div>
<div class="r" style="left:11.00px;top:799.70px;width:35.00px;height:1.20px;background:#3c3c3c;"></div>
<div class="t" style="top:780.49px;font-size:17.5px;color:#e6e6e6;left:-1471.00px;width:3000px;text-align:center;">21</div>
<div class="r" style="left:11.00px;top:822.50px;width:35.00px;height:1.20px;background:#3c3c3c;"></div>
<div class="t" style="top:803.29px;font-size:17.5px;color:#e6e6e6;left:-1471.00px;width:3000px;text-align:center;">22</div>
<div class="r" style="left:11.00px;top:827.40px;width:35.00px;height:1.20px;background:#3c3c3c;"></div>
<div class="r" style="left:11.00px;top:854.00px;width:35.00px;height:1.20px;background:#3c3c3c;"></div>
<div class="t" style="top:834.79px;font-size:17.5px;color:#e6e6e6;left:-1471.00px;width:3000px;text-align:center;">24</div>
<div class="r" style="left:11.00px;top:876.70px;width:35.00px;height:1.20px;background:#3c3c3c;"></div>
<div class="t" style="top:857.49px;font-size:17.5px;color:#e6e6e6;left:-1471.00px;width:3000px;text-align:center;">25</div>
<div class="r" style="left:11.00px;top:899.70px;width:35.00px;height:1.20px;background:#3c3c3c;"></div>
<div class="t" style="top:880.49px;font-size:17.5px;color:#e6e6e6;left:-1471.00px;width:3000px;text-align:center;">26</div>
<div class="r" style="left:11.00px;top:922.50px;width:35.00px;height:1.20px;background:#3c3c3c;"></div>
<div class="t" style="top:903.29px;font-size:17.5px;color:#e6e6e6;left:-1471.00px;width:3000px;text-align:center;">27</div>
<div class="r" style="left:11.00px;top:945.50px;width:35.00px;height:1.20px;background:#3c3c3c;"></div>
<div class="t" style="top:926.29px;font-size:17.5px;color:#e6e6e6;left:-1471.00px;width:3000px;text-align:center;">28</div>
<div class="r" style="left:11.00px;top:968.30px;width:35.00px;height:1.20px;background:#3c3c3c;"></div>
<div class="t" style="top:949.09px;font-size:17.5px;color:#e6e6e6;left:-1471.00px;width:3000px;text-align:center;">29</div>
<div class="r" style="left:11.00px;top:991.00px;width:35.00px;height:1.20px;background:#3c3c3c;"></div>
<div class="t" style="top:971.79px;font-size:17.5px;color:#e6e6e6;left:-1471.00px;width:3000px;text-align:center;">30</div>
<div class="r" style="left:11.00px;top:1017.60px;width:35.00px;height:1.20px;background:#3c3c3c;"></div>
<div class="t" style="top:998.39px;font-size:17.5px;color:#e6e6e6;left:-1471.00px;width:3000px;text-align:center;">31</div>
<div class="r" style="left:11.00px;top:1040.60px;width:35.00px;height:1.20px;background:#3c3c3c;"></div>
<div class="t" style="top:1021.39px;font-size:17.5px;color:#e6e6e6;left:-1471.00px;width:3000px;text-align:center;">32</div>
<div class="r" style="left:11.00px;top:1064.40px;width:35.00px;height:1.20px;background:#3c3c3c;"></div>
<div class="t" style="top:1045.19px;font-size:17.5px;color:#e6e6e6;left:-1471.00px;width:3000px;text-align:center;">33</div>
<div class="r" style="left:11.00px;top:1100.10px;width:35.00px;height:1.20px;background:#3c3c3c;"></div>
<div class="t" style="top:1080.89px;font-size:17.5px;color:#e6e6e6;left:-1471.00px;width:3000px;text-align:center;">34</div>
<div class="r" style="left:11.00px;top:1123.11px;width:35.00px;height:1.20px;background:#3c3c3c;"></div>
<div class="t" style="top:1103.90px;font-size:17.5px;color:#e6e6e6;left:-1471.00px;width:3000px;text-align:center;">35</div>
<div class="r" style="left:11.00px;top:1146.12px;width:35.00px;height:1.20px;background:#3c3c3c;"></div>
<div class="t" style="top:1126.91px;font-size:17.5px;color:#e6e6e6;left:-1471.00px;width:3000px;text-align:center;">36</div>
<div class="r" style="left:11.00px;top:1169.13px;width:35.00px;height:1.20px;background:#3c3c3c;"></div>
<div class="t" style="top:1149.92px;font-size:17.5px;color:#e6e6e6;left:-1471.00px;width:3000px;text-align:center;">37</div>
<div class="r" style="left:11.00px;top:1192.14px;width:35.00px;height:1.20px;background:#3c3c3c;"></div>
<div class="t" style="top:1172.93px;font-size:17.5px;color:#e6e6e6;left:-1471.00px;width:3000px;text-align:center;">38</div>
<div class="r" style="left:11.00px;top:1215.15px;width:35.00px;height:1.20px;background:#3c3c3c;"></div>
<div class="t" style="top:1195.94px;font-size:17.5px;color:#e6e6e6;left:-1471.00px;width:3000px;text-align:center;">39</div>
<div class="r" style="left:11.00px;top:1238.16px;width:35.00px;height:1.20px;background:#3c3c3c;"></div>
<div class="t" style="top:1218.95px;font-size:17.5px;color:#e6e6e6;left:-1471.00px;width:3000px;text-align:center;">40</div>
<div class="r" style="left:11.00px;top:1261.17px;width:35.00px;height:1.20px;background:#3c3c3c;"></div>
<div class="t" style="top:1241.96px;font-size:17.5px;color:#e6e6e6;left:-1471.00px;width:3000px;text-align:center;">41</div>
<div class="r" style="left:11.00px;top:1284.18px;width:35.00px;height:1.20px;background:#3c3c3c;"></div>
<div class="t" style="top:1264.97px;font-size:17.5px;color:#e6e6e6;left:-1471.00px;width:3000px;text-align:center;">42</div>
<div class="r" style="left:11.00px;top:1307.19px;width:35.00px;height:1.20px;background:#3c3c3c;"></div>
<div class="t" style="top:1287.98px;font-size:17.5px;color:#e6e6e6;left:-1471.00px;width:3000px;text-align:center;">43</div>
<div class="r" style="left:11.00px;top:1330.20px;width:35.00px;height:1.20px;background:#3c3c3c;"></div>
<div class="t" style="top:1310.99px;font-size:17.5px;color:#e6e6e6;left:-1471.00px;width:3000px;text-align:center;">44</div>
<div class="r" style="left:11.00px;top:1353.21px;width:35.00px;height:1.20px;background:#3c3c3c;"></div>
<div class="t" style="top:1334.00px;font-size:17.5px;color:#e6e6e6;left:-1471.00px;width:3000px;text-align:center;">45</div>
<div class="r" style="left:11.00px;top:1376.22px;width:35.00px;height:1.20px;background:#3c3c3c;"></div>
<div class="t" style="top:1357.01px;font-size:17.5px;color:#e6e6e6;left:-1471.00px;width:3000px;text-align:center;">46</div>
<div class="r" style="left:11.00px;top:1399.23px;width:35.00px;height:1.20px;background:#3c3c3c;"></div>
<div class="t" style="top:1380.02px;font-size:17.5px;color:#e6e6e6;left:-1471.00px;width:3000px;text-align:center;">47</div>
<div class="r" style="left:11.00px;top:1422.24px;width:35.00px;height:1.20px;background:#3c3c3c;"></div>
<div class="t" style="top:1403.03px;font-size:17.5px;color:#e6e6e6;left:-1471.00px;width:3000px;text-align:center;">48</div>
<div class="r" style="left:11.00px;top:1445.25px;width:35.00px;height:1.20px;background:#3c3c3c;"></div>
<div class="t" style="top:1426.04px;font-size:17.5px;color:#e6e6e6;left:-1471.00px;width:3000px;text-align:center;">49</div>
<div class="r" style="left:11.00px;top:1468.26px;width:35.00px;height:1.20px;background:#3c3c3c;"></div>
<div class="t" style="top:1449.05px;font-size:17.5px;color:#e6e6e6;left:-1471.00px;width:3000px;text-align:center;">50</div>
<div class="r" style="left:11.00px;top:1491.27px;width:35.00px;height:1.20px;background:#3c3c3c;"></div>
<div class="t" style="top:1472.06px;font-size:17.5px;color:#e6e6e6;left:-1471.00px;width:3000px;text-align:center;">51</div>
<div class="r" style="left:11.00px;top:1514.28px;width:35.00px;height:1.20px;background:#3c3c3c;"></div>
<div class="t" style="top:1495.07px;font-size:17.5px;color:#e6e6e6;left:-1471.00px;width:3000px;text-align:center;">52</div>
<div class="r" style="left:11.00px;top:1537.29px;width:35.00px;height:1.20px;background:#3c3c3c;"></div>
<div class="t" style="top:1518.08px;font-size:17.5px;color:#e6e6e6;left:-1471.00px;width:3000px;text-align:center;">53</div>
<div class="r" style="left:11.00px;top:1560.30px;width:35.00px;height:1.20px;background:#3c3c3c;"></div>
<div class="t" style="top:1541.09px;font-size:17.5px;color:#e6e6e6;left:-1471.00px;width:3000px;text-align:center;">54</div>
<div class="r" style="left:11.00px;top:1595.90px;width:35.00px;height:1.20px;background:#3c3c3c;"></div>
<div class="t" style="top:1576.69px;font-size:17.5px;color:#e6e6e6;left:-1471.00px;width:3000px;text-align:center;">55</div>
<div class="r" style="left:11.00px;top:1600.20px;width:35.00px;height:1.20px;background:#3c3c3c;"></div>
<div class="r" style="left:11.00px;top:1623.20px;width:35.00px;height:1.20px;background:#3c3c3c;"></div>
<div class="t" style="top:1603.99px;font-size:17.5px;color:#e6e6e6;left:-1471.00px;width:3000px;text-align:center;">57</div>
<div class="r" style="left:11.00px;top:1628.10px;width:35.00px;height:1.20px;background:#3c3c3c;"></div>
<div class="r" style="left:11.00px;top:1651.10px;width:35.00px;height:1.20px;background:#3c3c3c;"></div>
<div class="t" style="top:1631.89px;font-size:17.5px;color:#e6e6e6;left:-1471.00px;width:3000px;text-align:center;">59</div>
<div class="r" style="left:11.00px;top:1674.10px;width:35.00px;height:1.20px;background:#3c3c3c;"></div>
<div class="t" style="top:1654.89px;font-size:17.5px;color:#e6e6e6;left:-1471.00px;width:3000px;text-align:center;">60</div>
<div class="r" style="left:47.10px;top:300.40px;width:2812.90px;height:1369.80px;background:#ffffff;"></div>
<div class="r" style="left:47.10px;top:426.30px;width:2812.90px;height:1.20px;background:#b8b8b8;"></div>
<div class="t" style="top:303.44px;font-size:33.5px;color:#222222;font-weight:bold;left:75.50px;">Financial Statements Summary</div>
<div class="t" style="top:340.79px;font-size:28.6px;color:#000000;font-weight:bold;left:75.50px;">ABC Company Inc.</div>
<div class="t" style="top:376.17px;font-size:18.7px;color:#2f6fde;font-weight:bold;left:74.00px;text-decoration:underline;text-underline-offset:2px;">Go to Table of Contents</div>
<div class="t" style="top:376.70px;font-size:21.5px;color:#222222;font-weight:bold;letter-spacing:0.1px;left:201.00px;width:1500px;text-align:right;">Select reporting year</div>
<div class="r" style="left:1723.00px;top:370.50px;width:274.70px;height:33.10px;background:#fff36b;border:1px solid #d6d6d6;box-sizing:border-box;"></div>
<div class="t" style="top:376.70px;font-size:21.5px;color:#111111;font-weight:bold;letter-spacing:0.8px;left:360.30px;width:3000px;text-align:center;">2026</div>
<div class="r" style="left:70.60px;top:427.80px;width:1073.70px;height:34.80px;background:#4b50d3;"></div>
<div class="t" style="top:430.65px;font-size:29px;color:#ffffff;font-weight:bold;letter-spacing:0.95px;left:-892.40px;width:3000px;text-align:center;">Income Statement ($&#x27;000) - 5 years to December 2030</div>
<div class="r" style="left:1175.50px;top:427.80px;width:1643.90px;height:34.80px;background:#4b50d3;"></div>
<div class="t" style="top:430.65px;font-size:29px;color:#ffffff;font-weight:bold;letter-spacing:0.95px;left:497.50px;width:3000px;text-align:center;">Income Statement ($&#x27;000) - 2026</div>
<div class="r" style="left:70.90px;top:468.00px;width:1073.40px;height:22.00px;background:#6c72e6;"></div>
<div class="r" style="left:543.60px;top:467.60px;width:1.50px;height:22.40px;background:#ffffff;"></div>
<div class="r" style="left:663.40px;top:467.60px;width:1.50px;height:22.40px;background:#ffffff;"></div>
<div class="r" style="left:783.80px;top:467.60px;width:1.50px;height:22.40px;background:#ffffff;"></div>
<div class="r" style="left:903.80px;top:467.60px;width:1.50px;height:22.40px;background:#ffffff;"></div>
<div class="r" style="left:1023.60px;top:467.60px;width:1.50px;height:22.40px;background:#ffffff;"></div>
<div class="t" style="top:470.86px;font-size:18.6px;color:#ffffff;font-weight:bold;left:82.90px;">Year Ending</div>
<div class="t" style="top:470.69px;font-size:18.8px;color:#ffffff;font-weight:bold;letter-spacing:0.5px;left:-895.80px;width:3000px;text-align:center;">2026</div>
<div class="t" style="top:470.69px;font-size:18.8px;color:#ffffff;font-weight:bold;letter-spacing:0.5px;left:-775.70px;width:3000px;text-align:center;">2027</div>
<div class="t" style="top:470.69px;font-size:18.8px;color:#ffffff;font-weight:bold;letter-spacing:0.5px;left:-655.50px;width:3000px;text-align:center;">2028</div>
<div class="t" style="top:470.69px;font-size:18.8px;color:#ffffff;font-weight:bold;letter-spacing:0.5px;left:-535.60px;width:3000px;text-align:center;">2029</div>
<div class="t" style="top:470.69px;font-size:18.8px;color:#ffffff;font-weight:bold;letter-spacing:0.5px;left:-415.70px;width:3000px;text-align:center;">2030</div>
<div class="r" style="left:1175.50px;top:468.00px;width:1643.90px;height:22.00px;background:#6c72e6;"></div>
<div class="r" style="left:1311.70px;top:467.60px;width:1.50px;height:22.40px;background:#ffffff;"></div>
<div class="r" style="left:1448.60px;top:467.60px;width:1.50px;height:22.40px;background:#ffffff;"></div>
<div class="r" style="left:1585.50px;top:467.60px;width:1.50px;height:22.40px;background:#ffffff;"></div>
<div class="r" style="left:1722.40px;top:467.60px;width:1.50px;height:22.40px;background:#ffffff;"></div>
<div class="r" style="left:1859.30px;top:467.60px;width:1.50px;height:22.40px;background:#ffffff;"></div>
<div class="r" style="left:1996.20px;top:467.60px;width:1.50px;height:22.40px;background:#ffffff;"></div>
<div class="r" style="left:2133.10px;top:467.60px;width:1.50px;height:22.40px;background:#ffffff;"></div>
<div class="r" style="left:2270.00px;top:467.60px;width:1.50px;height:22.40px;background:#ffffff;"></div>
<div class="r" style="left:2406.90px;top:467.60px;width:1.50px;height:22.40px;background:#ffffff;"></div>
<div class="r" style="left:2543.80px;top:467.60px;width:1.50px;height:22.40px;background:#ffffff;"></div>
<div class="r" style="left:2680.70px;top:467.60px;width:1.50px;height:22.40px;background:#ffffff;"></div>
<div class="t" style="top:470.69px;font-size:18.8px;color:#ffffff;font-weight:bold;letter-spacing:0.3px;left:-256.05px;width:3000px;text-align:center;">Jan</div>
<div class="t" style="top:470.69px;font-size:18.8px;color:#ffffff;font-weight:bold;letter-spacing:0.3px;left:-119.15px;width:3000px;text-align:center;">Feb</div>
<div class="t" style="top:470.69px;font-size:18.8px;color:#ffffff;font-weight:bold;letter-spacing:0.3px;left:17.75px;width:3000px;text-align:center;">Mar</div>
<div class="t" style="top:470.69px;font-size:18.8px;color:#ffffff;font-weight:bold;letter-spacing:0.3px;left:154.65px;width:3000px;text-align:center;">Apr</div>
<div class="t" style="top:470.69px;font-size:18.8px;color:#ffffff;font-weight:bold;letter-spacing:0.3px;left:291.55px;width:3000px;text-align:center;">May</div>
<div class="t" style="top:470.69px;font-size:18.8px;color:#ffffff;font-weight:bold;letter-spacing:0.3px;left:428.45px;width:3000px;text-align:center;">Jun</div>
<div class="t" style="top:470.69px;font-size:18.8px;color:#ffffff;font-weight:bold;letter-spacing:0.3px;left:565.35px;width:3000px;text-align:center;">Jul</div>
<div class="t" style="top:470.69px;font-size:18.8px;color:#ffffff;font-weight:bold;letter-spacing:0.3px;left:702.25px;width:3000px;text-align:center;">Aug</div>
<div class="t" style="top:470.69px;font-size:18.8px;color:#ffffff;font-weight:bold;letter-spacing:0.3px;left:839.15px;width:3000px;text-align:center;">Sep</div>
<div class="t" style="top:470.69px;font-size:18.8px;color:#ffffff;font-weight:bold;letter-spacing:0.3px;left:976.05px;width:3000px;text-align:center;">Oct</div>
<div class="t" style="top:470.69px;font-size:18.8px;color:#ffffff;font-weight:bold;letter-spacing:0.3px;left:1112.95px;width:3000px;text-align:center;">Nov</div>
<div class="t" style="top:470.69px;font-size:18.8px;color:#ffffff;font-weight:bold;letter-spacing:0.3px;left:1249.85px;width:3000px;text-align:center;">Dec</div>
<div class="t" style="top:495.31px;font-size:17px;color:#111111;left:74.30px;">Revenue</div>
<div class="t" style="top:494.80px;font-size:17.6px;color:#111;left:-846.90px;width:1500px;text-align:right;">708</div>
<div class="t" style="top:494.80px;font-size:17.6px;color:#111;left:-726.50px;width:1500px;text-align:right;">1,796</div>
<div class="t" style="top:494.80px;font-size:17.6px;color:#111;left:-606.50px;width:1500px;text-align:right;">3,389</div>
<div class="t" style="top:494.80px;font-size:17.6px;color:#111;left:-486.70px;width:1500px;text-align:right;">5,679</div>
<div class="t" style="top:494.80px;font-size:17.6px;color:#111;left:-366.70px;width:1500px;text-align:right;">8,100</div>
<div class="t" style="top:494.80px;font-size:17.6px;color:#111;left:-198.60px;width:1500px;text-align:right;">59</div>
<div class="t" style="top:494.80px;font-size:17.6px;color:#111;left:-61.70px;width:1500px;text-align:right;">59</div>
<div class="t" style="top:494.80px;font-size:17.6px;color:#111;left:75.20px;width:1500px;text-align:right;">59</div>
<div class="t" style="top:494.80px;font-size:17.6px;color:#111;left:212.10px;width:1500px;text-align:right;">59</div>
<div class="t" style="top:494.80px;font-size:17.6px;color:#111;left:349.00px;width:1500px;text-align:right;">59</div>
<div class="t" style="top:494.80px;font-size:17.6px;color:#111;left:485.90px;width:1500px;text-align:right;">59</div>
<div class="t" style="top:494.80px;font-size:17.6px;color:#111;left:622.80px;width:1500px;text-align:right;">59</div>
<div class="t" style="top:494.80px;font-size:17.6px;color:#111;left:759.70px;width:1500px;text-align:right;">59</div>
<div class="t" style="top:494.80px;font-size:17.6px;color:#111;left:896.60px;width:1500px;text-align:right;">59</div>
<div class="t" style="top:494.80px;font-size:17.6px;color:#111;left:1033.50px;width:1500px;text-align:right;">59</div>
<div class="t" style="top:494.80px;font-size:17.6px;color:#111;left:1170.40px;width:1500px;text-align:right;">59</div>
<div class="t" style="top:494.80px;font-size:17.6px;color:#111;left:1307.30px;width:1500px;text-align:right;">59</div>
<div class="t" style="top:517.69px;font-size:17.5px;color:#111111;font-style:italic;left:92.50px;">Growth %</div>
<div class="t" style="top:517.60px;font-size:17.6px;color:#111;font-style:italic;left:-727.50px;width:1500px;text-align:right;">154%</div>
<div class="t" style="top:517.60px;font-size:17.6px;color:#111;font-style:italic;left:-607.50px;width:1500px;text-align:right;">89%</div>
<div class="t" style="top:517.60px;font-size:17.6px;color:#111;font-style:italic;left:-487.70px;width:1500px;text-align:right;">68%</div>
<div class="t" style="top:517.60px;font-size:17.6px;color:#111;font-style:italic;left:-367.70px;width:1500px;text-align:right;">43%</div>
<div class="t" style="top:517.60px;font-size:17.6px;color:#111;left:-198.60px;width:1500px;text-align:right;">-</div>
<div class="t" style="top:517.60px;font-size:17.6px;color:#111;left:-61.70px;width:1500px;text-align:right;">-</div>
<div class="t" style="top:517.60px;font-size:17.6px;color:#111;left:75.20px;width:1500px;text-align:right;">-</div>
<div class="t" style="top:517.60px;font-size:17.6px;color:#111;left:212.10px;width:1500px;text-align:right;">-</div>
<div class="t" style="top:517.60px;font-size:17.6px;color:#111;left:349.00px;width:1500px;text-align:right;">-</div>
<div class="t" style="top:517.60px;font-size:17.6px;color:#111;left:485.90px;width:1500px;text-align:right;">-</div>
<div class="t" style="top:517.60px;font-size:17.6px;color:#111;left:622.80px;width:1500px;text-align:right;">-</div>
<div class="t" style="top:517.60px;font-size:17.6px;color:#111;left:759.70px;width:1500px;text-align:right;">-</div>
<div class="t" style="top:517.60px;font-size:17.6px;color:#111;left:896.60px;width:1500px;text-align:right;">-</div>
<div class="t" style="top:517.60px;font-size:17.6px;color:#111;left:1033.50px;width:1500px;text-align:right;">-</div>
<div class="t" style="top:517.60px;font-size:17.6px;color:#111;left:1170.40px;width:1500px;text-align:right;">-</div>
<div class="t" style="top:517.60px;font-size:17.6px;color:#111;left:1307.30px;width:1500px;text-align:right;">-</div>
<div class="t" style="top:541.41px;font-size:17px;color:#111111;left:74.30px;">COGS</div>
<div class="t" style="top:540.90px;font-size:17.6px;color:#111;left:-839.90px;width:1500px;text-align:right;">(98)</div>
<div class="t" style="top:540.90px;font-size:17.6px;color:#111;left:-719.50px;width:1500px;text-align:right;">(233)</div>
<div class="t" style="top:540.90px;font-size:17.6px;color:#111;left:-599.50px;width:1500px;text-align:right;">(407)</div>
<div class="t" style="top:540.90px;font-size:17.6px;color:#111;left:-479.70px;width:1500px;text-align:right;">(625)</div>
<div class="t" style="top:540.90px;font-size:17.6px;color:#111;left:-359.70px;width:1500px;text-align:right;">(810)</div>
<div class="t" style="top:540.90px;font-size:17.6px;color:#111;left:-191.60px;width:1500px;text-align:right;">(8)</div>
<div class="t" style="top:540.90px;font-size:17.6px;color:#111;left:-54.70px;width:1500px;text-align:right;">(8)</div>
<div class="t" style="top:540.90px;font-size:17.6px;color:#111;left:82.20px;width:1500px;text-align:right;">(8)</div>
<div class="t" style="top:540.90px;font-size:17.6px;color:#111;left:219.10px;width:1500px;text-align:right;">(8)</div>
<div class="t" style="top:540.90px;font-size:17.6px;color:#111;left:356.00px;width:1500px;text-align:right;">(8)</div>
<div class="t" style="top:540.90px;font-size:17.6px;color:#111;left:492.90px;width:1500px;text-align:right;">(8)</div>
<div class="t" style="top:540.90px;font-size:17.6px;color:#111;left:629.80px;width:1500px;text-align:right;">(8)</div>
<div class="t" style="top:540.90px;font-size:17.6px;color:#111;left:766.70px;width:1500px;text-align:right;">(8)</div>
<div class="t" style="top:540.90px;font-size:17.6px;color:#111;left:903.60px;width:1500px;text-align:right;">(8)</div>
<div class="t" style="top:540.90px;font-size:17.6px;color:#111;left:1040.50px;width:1500px;text-align:right;">(8)</div>
<div class="t" style="top:540.90px;font-size:17.6px;color:#111;left:1177.40px;width:1500px;text-align:right;">(8)</div>
<div class="t" style="top:540.90px;font-size:17.6px;color:#111;left:1314.30px;width:1500px;text-align:right;">(8)</div>
<div class="t" style="top:563.49px;font-size:17.5px;color:#111111;font-style:italic;left:92.50px;">% of Revenue</div>
<div class="t" style="top:563.40px;font-size:17.6px;color:#111;font-style:italic;left:-840.90px;width:1500px;text-align:right;">(14%)</div>
<div class="t" style="top:563.40px;font-size:17.6px;color:#111;font-style:italic;left:-720.50px;width:1500px;text-align:right;">(13%)</div>
<div class="t" style="top:563.40px;font-size:17.6px;color:#111;font-style:italic;left:-600.50px;width:1500px;text-align:right;">(12%)</div>
<div class="t" style="top:563.40px;font-size:17.6px;color:#111;font-style:italic;left:-480.70px;width:1500px;text-align:right;">(11%)</div>
<div class="t" style="top:563.40px;font-size:17.6px;color:#111;font-style:italic;left:-360.70px;width:1500px;text-align:right;">(10%)</div>
<div class="t" style="top:563.40px;font-size:17.6px;color:#111;font-style:italic;left:-192.60px;width:1500px;text-align:right;">(14%)</div>
<div class="t" style="top:563.40px;font-size:17.6px;color:#111;font-style:italic;left:-55.70px;width:1500px;text-align:right;">(14%)</div>
<div class="t" style="top:563.40px;font-size:17.6px;color:#111;font-style:italic;left:81.20px;width:1500px;text-align:right;">(14%)</div>
<div class="t" style="top:563.40px;font-size:17.6px;color:#111;font-style:italic;left:218.10px;width:1500px;text-align:right;">(14%)</div>
<div class="t" style="top:563.40px;font-size:17.6px;color:#111;font-style:italic;left:355.00px;width:1500px;text-align:right;">(14%)</div>
<div class="t" style="top:563.40px;font-size:17.6px;color:#111;font-style:italic;left:491.90px;width:1500px;text-align:right;">(14%)</div>
<div class="t" style="top:563.40px;font-size:17.6px;color:#111;font-style:italic;left:628.80px;width:1500px;text-align:right;">(14%)</div>
<div class="t" style="top:563.40px;font-size:17.6px;color:#111;font-style:italic;left:765.70px;width:1500px;text-align:right;">(14%)</div>
<div class="t" style="top:563.40px;font-size:17.6px;color:#111;font-style:italic;left:902.60px;width:1500px;text-align:right;">(14%)</div>
<div class="t" style="top:563.40px;font-size:17.6px;color:#111;font-style:italic;left:1039.50px;width:1500px;text-align:right;">(14%)</div>
<div class="t" style="top:563.40px;font-size:17.6px;color:#111;font-style:italic;left:1176.40px;width:1500px;text-align:right;">(14%)</div>
<div class="t" style="top:563.40px;font-size:17.6px;color:#111;font-style:italic;left:1313.30px;width:1500px;text-align:right;">(14%)</div>
<div class="r" style="left:70.60px;top:582.20px;width:1073.70px;height:26.50px;background:#4bb1e6;"></div>
<div class="r" style="left:1175.50px;top:582.20px;width:1643.90px;height:26.50px;background:#4bb1e6;"></div>
<div class="t" style="top:586.18px;font-size:21.4px;color:#ffffff;font-weight:bold;left:85.60px;">Gross Margin</div>
<div class="t" style="top:587.49px;font-size:18.2px;color:#ffffff;font-weight:bold;letter-spacing:0.4px;left:-847.40px;width:1500px;text-align:right;">610</div>
<div class="t" style="top:587.49px;font-size:18.2px;color:#ffffff;font-weight:bold;letter-spacing:0.4px;left:-727.00px;width:1500px;text-align:right;">1,562</div>
<div class="t" style="top:587.49px;font-size:18.2px;color:#ffffff;font-weight:bold;letter-spacing:0.4px;left:-607.00px;width:1500px;text-align:right;">2,982</div>
<div class="t" style="top:587.49px;font-size:18.2px;color:#ffffff;font-weight:bold;letter-spacing:0.4px;left:-487.20px;width:1500px;text-align:right;">5,054</div>
<div class="t" style="top:587.49px;font-size:18.2px;color:#ffffff;font-weight:bold;letter-spacing:0.4px;left:-367.20px;width:1500px;text-align:right;">7,290</div>
<div class="t" style="top:587.49px;font-size:18.2px;color:#ffffff;font-weight:bold;letter-spacing:0.4px;left:-199.10px;width:1500px;text-align:right;">51</div>
<div class="t" style="top:587.49px;font-size:18.2px;color:#ffffff;font-weight:bold;letter-spacing:0.4px;left:-62.20px;width:1500px;text-align:right;">51</div>
<div class="t" style="top:587.49px;font-size:18.2px;color:#ffffff;font-weight:bold;letter-spacing:0.4px;left:74.70px;width:1500px;text-align:right;">51</div>
<div class="t" style="top:587.49px;font-size:18.2px;color:#ffffff;font-weight:bold;letter-spacing:0.4px;left:211.60px;width:1500px;text-align:right;">51</div>
<div class="t" style="top:587.49px;font-size:18.2px;color:#ffffff;font-weight:bold;letter-spacing:0.4px;left:348.50px;width:1500px;text-align:right;">51</div>
<div class="t" style="top:587.49px;font-size:18.2px;color:#ffffff;font-weight:bold;letter-spacing:0.4px;left:485.40px;width:1500px;text-align:right;">51</div>
<div class="t" style="top:587.49px;font-size:18.2px;color:#ffffff;font-weight:bold;letter-spacing:0.4px;left:622.30px;width:1500px;text-align:right;">51</div>
<div class="t" style="top:587.49px;font-size:18.2px;color:#ffffff;font-weight:bold;letter-spacing:0.4px;left:759.20px;width:1500px;text-align:right;">51</div>
<div class="t" style="top:587.49px;font-size:18.2px;color:#ffffff;font-weight:bold;letter-spacing:0.4px;left:896.10px;width:1500px;text-align:right;">51</div>
<div class="t" style="top:587.49px;font-size:18.2px;color:#ffffff;font-weight:bold;letter-spacing:0.4px;left:1033.00px;width:1500px;text-align:right;">51</div>
<div class="t" style="top:587.49px;font-size:18.2px;color:#ffffff;font-weight:bold;letter-spacing:0.4px;left:1169.90px;width:1500px;text-align:right;">51</div>
<div class="t" style="top:587.49px;font-size:18.2px;color:#ffffff;font-weight:bold;letter-spacing:0.4px;left:1306.80px;width:1500px;text-align:right;">51</div>
<div class="t" style="top:613.59px;font-size:17.5px;color:#111111;font-style:italic;left:92.50px;">Gross Margin %</div>
<div class="t" style="top:613.50px;font-size:17.6px;color:#111;font-style:italic;left:-847.90px;width:1500px;text-align:right;">86%</div>
<div class="t" style="top:613.50px;font-size:17.6px;color:#111;font-style:italic;left:-727.50px;width:1500px;text-align:right;">87%</div>
<div class="t" style="top:613.50px;font-size:17.6px;color:#111;font-style:italic;left:-607.50px;width:1500px;text-align:right;">88%</div>
<div class="t" style="top:613.50px;font-size:17.6px;color:#111;font-style:italic;left:-487.70px;width:1500px;text-align:right;">89%</div>
<div class="t" style="top:613.50px;font-size:17.6px;color:#111;font-style:italic;left:-367.70px;width:1500px;text-align:right;">90%</div>
<div class="t" style="top:613.50px;font-size:17.6px;color:#111;font-style:italic;left:-199.60px;width:1500px;text-align:right;">86%</div>
<div class="t" style="top:613.50px;font-size:17.6px;color:#111;font-style:italic;left:-62.70px;width:1500px;text-align:right;">86%</div>
<div class="t" style="top:613.50px;font-size:17.6px;color:#111;font-style:italic;left:74.20px;width:1500px;text-align:right;">86%</div>
<div class="t" style="top:613.50px;font-size:17.6px;color:#111;font-style:italic;left:211.10px;width:1500px;text-align:right;">86%</div>
<div class="t" style="top:613.50px;font-size:17.6px;color:#111;font-style:italic;left:348.00px;width:1500px;text-align:right;">86%</div>
<div class="t" style="top:613.50px;font-size:17.6px;color:#111;font-style:italic;left:484.90px;width:1500px;text-align:right;">86%</div>
<div class="t" style="top:613.50px;font-size:17.6px;color:#111;font-style:italic;left:621.80px;width:1500px;text-align:right;">86%</div>
<div class="t" style="top:613.50px;font-size:17.6px;color:#111;font-style:italic;left:758.70px;width:1500px;text-align:right;">86%</div>
<div class="t" style="top:613.50px;font-size:17.6px;color:#111;font-style:italic;left:895.60px;width:1500px;text-align:right;">86%</div>
<div class="t" style="top:613.50px;font-size:17.6px;color:#111;font-style:italic;left:1032.50px;width:1500px;text-align:right;">86%</div>
<div class="t" style="top:613.50px;font-size:17.6px;color:#111;font-style:italic;left:1169.40px;width:1500px;text-align:right;">86%</div>
<div class="t" style="top:613.50px;font-size:17.6px;color:#111;font-style:italic;left:1306.30px;width:1500px;text-align:right;">86%</div>
<div class="t" style="top:636.41px;font-size:17px;color:#111111;left:74.30px;">Variable Expenses</div>
<div class="t" style="top:635.90px;font-size:17.6px;color:#111;left:-839.90px;width:1500px;text-align:right;">(42)</div>
<div class="t" style="top:635.90px;font-size:17.6px;color:#111;left:-719.50px;width:1500px;text-align:right;">(95)</div>
<div class="t" style="top:635.90px;font-size:17.6px;color:#111;left:-599.50px;width:1500px;text-align:right;">(156)</div>
<div class="t" style="top:635.90px;font-size:17.6px;color:#111;left:-479.70px;width:1500px;text-align:right;">(221)</div>
<div class="t" style="top:635.90px;font-size:17.6px;color:#111;left:-359.70px;width:1500px;text-align:right;">(259)</div>
<div class="t" style="top:635.90px;font-size:17.6px;color:#111;left:-191.60px;width:1500px;text-align:right;">(4)</div>
<div class="t" style="top:635.90px;font-size:17.6px;color:#111;left:-54.70px;width:1500px;text-align:right;">(4)</div>
<div class="t" style="top:635.90px;font-size:17.6px;color:#111;left:82.20px;width:1500px;text-align:right;">(4)</div>
<div class="t" style="top:635.90px;font-size:17.6px;color:#111;left:219.10px;width:1500px;text-align:right;">(4)</div>
<div class="t" style="top:635.90px;font-size:17.6px;color:#111;left:356.00px;width:1500px;text-align:right;">(4)</div>
<div class="t" style="top:635.90px;font-size:17.6px;color:#111;left:492.90px;width:1500px;text-align:right;">(4)</div>
<div class="t" style="top:635.90px;font-size:17.6px;color:#111;left:629.80px;width:1500px;text-align:right;">(4)</div>
<div class="t" style="top:635.90px;font-size:17.6px;color:#111;left:766.70px;width:1500px;text-align:right;">(4)</div>
<div class="t" style="top:635.90px;font-size:17.6px;color:#111;left:903.60px;width:1500px;text-align:right;">(4)</div>
<div class="t" style="top:635.90px;font-size:17.6px;color:#111;left:1040.50px;width:1500px;text-align:right;">(4)</div>
<div class="t" style="top:635.90px;font-size:17.6px;color:#111;left:1177.40px;width:1500px;text-align:right;">(4)</div>
<div class="t" style="top:635.90px;font-size:17.6px;color:#111;left:1314.30px;width:1500px;text-align:right;">(4)</div>
<div class="t" style="top:658.59px;font-size:17.5px;color:#111111;font-style:italic;left:92.50px;">% of Revenue</div>
<div class="t" style="top:658.50px;font-size:17.6px;color:#111;font-style:italic;left:-840.90px;width:1500px;text-align:right;">(6%)</div>
<div class="t" style="top:658.50px;font-size:17.6px;color:#111;font-style:italic;left:-720.50px;width:1500px;text-align:right;">(5%)</div>
<div class="t" style="top:658.50px;font-size:17.6px;color:#111;font-style:italic;left:-600.50px;width:1500px;text-align:right;">(5%)</div>
<div class="t" style="top:658.50px;font-size:17.6px;color:#111;font-style:italic;left:-480.70px;width:1500px;text-align:right;">(4%)</div>
<div class="t" style="top:658.50px;font-size:17.6px;color:#111;font-style:italic;left:-360.70px;width:1500px;text-align:right;">(3%)</div>
<div class="t" style="top:658.50px;font-size:17.6px;color:#111;font-style:italic;left:-192.60px;width:1500px;text-align:right;">(6%)</div>
<div class="t" style="top:658.50px;font-size:17.6px;color:#111;font-style:italic;left:-55.70px;width:1500px;text-align:right;">(6%)</div>
<div class="t" style="top:658.50px;font-size:17.6px;color:#111;font-style:italic;left:81.20px;width:1500px;text-align:right;">(6%)</div>
<div class="t" style="top:658.50px;font-size:17.6px;color:#111;font-style:italic;left:218.10px;width:1500px;text-align:right;">(6%)</div>
<div class="t" style="top:658.50px;font-size:17.6px;color:#111;font-style:italic;left:355.00px;width:1500px;text-align:right;">(6%)</div>
<div class="t" style="top:658.50px;font-size:17.6px;color:#111;font-style:italic;left:491.90px;width:1500px;text-align:right;">(6%)</div>
<div class="t" style="top:658.50px;font-size:17.6px;color:#111;font-style:italic;left:628.80px;width:1500px;text-align:right;">(6%)</div>
<div class="t" style="top:658.50px;font-size:17.6px;color:#111;font-style:italic;left:765.70px;width:1500px;text-align:right;">(6%)</div>
<div class="t" style="top:658.50px;font-size:17.6px;color:#111;font-style:italic;left:902.60px;width:1500px;text-align:right;">(6%)</div>
<div class="t" style="top:658.50px;font-size:17.6px;color:#111;font-style:italic;left:1039.50px;width:1500px;text-align:right;">(6%)</div>
<div class="t" style="top:658.50px;font-size:17.6px;color:#111;font-style:italic;left:1176.40px;width:1500px;text-align:right;">(6%)</div>
<div class="t" style="top:658.50px;font-size:17.6px;color:#111;font-style:italic;left:1313.30px;width:1500px;text-align:right;">(6%)</div>
<div class="r" style="left:70.60px;top:677.30px;width:1073.70px;height:26.30px;background:#4bb1e6;"></div>
<div class="r" style="left:1175.50px;top:677.30px;width:1643.90px;height:26.30px;background:#4bb1e6;"></div>
<div class="t" style="top:681.08px;font-size:21.4px;color:#ffffff;font-weight:bold;left:85.60px;">Contribution Margin</div>
<div class="t" style="top:682.39px;font-size:18.2px;color:#ffffff;font-weight:bold;letter-spacing:0.4px;left:-847.40px;width:1500px;text-align:right;">567</div>
<div class="t" style="top:682.39px;font-size:18.2px;color:#ffffff;font-weight:bold;letter-spacing:0.4px;left:-727.00px;width:1500px;text-align:right;">1,467</div>
<div class="t" style="top:682.39px;font-size:18.2px;color:#ffffff;font-weight:bold;letter-spacing:0.4px;left:-607.00px;width:1500px;text-align:right;">2,826</div>
<div class="t" style="top:682.39px;font-size:18.2px;color:#ffffff;font-weight:bold;letter-spacing:0.4px;left:-487.20px;width:1500px;text-align:right;">4,833</div>
<div class="t" style="top:682.39px;font-size:18.2px;color:#ffffff;font-weight:bold;letter-spacing:0.4px;left:-367.20px;width:1500px;text-align:right;">7,031</div>
<div class="t" style="top:682.39px;font-size:18.2px;color:#ffffff;font-weight:bold;letter-spacing:0.4px;left:-199.10px;width:1500px;text-align:right;">47</div>
<div class="t" style="top:682.39px;font-size:18.2px;color:#ffffff;font-weight:bold;letter-spacing:0.4px;left:-62.20px;width:1500px;text-align:right;">47</div>
<div class="t" style="top:682.39px;font-size:18.2px;color:#ffffff;font-weight:bold;letter-spacing:0.4px;left:74.70px;width:1500px;text-align:right;">47</div>
<div class="t" style="top:682.39px;font-size:18.2px;color:#ffffff;font-weight:bold;letter-spacing:0.4px;left:211.60px;width:1500px;text-align:right;">47</div>
<div class="t" style="top:682.39px;font-size:18.2px;color:#ffffff;font-weight:bold;letter-spacing:0.4px;left:348.50px;width:1500px;text-align:right;">47</div>
<div class="t" style="top:682.39px;font-size:18.2px;color:#ffffff;font-weight:bold;letter-spacing:0.4px;left:485.40px;width:1500px;text-align:right;">47</div>
<div class="t" style="top:682.39px;font-size:18.2px;color:#ffffff;font-weight:bold;letter-spacing:0.4px;left:622.30px;width:1500px;text-align:right;">47</div>
<div class="t" style="top:682.39px;font-size:18.2px;color:#ffffff;font-weight:bold;letter-spacing:0.4px;left:759.20px;width:1500px;text-align:right;">47</div>
<div class="t" style="top:682.39px;font-size:18.2px;color:#ffffff;font-weight:bold;letter-spacing:0.4px;left:896.10px;width:1500px;text-align:right;">47</div>
<div class="t" style="top:682.39px;font-size:18.2px;color:#ffffff;font-weight:bold;letter-spacing:0.4px;left:1033.00px;width:1500px;text-align:right;">47</div>
<div class="t" style="top:682.39px;font-size:18.2px;color:#ffffff;font-weight:bold;letter-spacing:0.4px;left:1169.90px;width:1500px;text-align:right;">47</div>
<div class="t" style="top:682.39px;font-size:18.2px;color:#ffffff;font-weight:bold;letter-spacing:0.4px;left:1306.80px;width:1500px;text-align:right;">47</div>
<div class="t" style="top:707.89px;font-size:17.5px;color:#111111;font-style:italic;left:92.50px;">Contribution Margin %</div>
<div class="t" style="top:707.80px;font-size:17.6px;color:#111;font-style:italic;left:-847.90px;width:1500px;text-align:right;">80%</div>
<div class="t" style="top:707.80px;font-size:17.6px;color:#111;font-style:italic;left:-727.50px;width:1500px;text-align:right;">82%</div>
<div class="t" style="top:707.80px;font-size:17.6px;color:#111;font-style:italic;left:-607.50px;width:1500px;text-align:right;">83%</div>
<div class="t" style="top:707.80px;font-size:17.6px;color:#111;font-style:italic;left:-487.70px;width:1500px;text-align:right;">85%</div>
<div class="t" style="top:707.80px;font-size:17.6px;color:#111;font-style:italic;left:-367.70px;width:1500px;text-align:right;">87%</div>
<div class="t" style="top:707.80px;font-size:17.6px;color:#111;font-style:italic;left:-199.60px;width:1500px;text-align:right;">80%</div>
<div class="t" style="top:707.80px;font-size:17.6px;color:#111;font-style:italic;left:-62.70px;width:1500px;text-align:right;">80%</div>
<div class="t" style="top:707.80px;font-size:17.6px;color:#111;font-style:italic;left:74.20px;width:1500px;text-align:right;">80%</div>
<div class="t" style="top:707.80px;font-size:17.6px;color:#111;font-style:italic;left:211.10px;width:1500px;text-align:right;">80%</div>
<div class="t" style="top:707.80px;font-size:17.6px;color:#111;font-style:italic;left:348.00px;width:1500px;text-align:right;">80%</div>
<div class="t" style="top:707.80px;font-size:17.6px;color:#111;font-style:italic;left:484.90px;width:1500px;text-align:right;">80%</div>
<div class="t" style="top:707.80px;font-size:17.6px;color:#111;font-style:italic;left:621.80px;width:1500px;text-align:right;">80%</div>
<div class="t" style="top:707.80px;font-size:17.6px;color:#111;font-style:italic;left:758.70px;width:1500px;text-align:right;">80%</div>
<div class="t" style="top:707.80px;font-size:17.6px;color:#111;font-style:italic;left:895.60px;width:1500px;text-align:right;">80%</div>
<div class="t" style="top:707.80px;font-size:17.6px;color:#111;font-style:italic;left:1032.50px;width:1500px;text-align:right;">80%</div>
<div class="t" style="top:707.80px;font-size:17.6px;color:#111;font-style:italic;left:1169.40px;width:1500px;text-align:right;">80%</div>
<div class="t" style="top:707.80px;font-size:17.6px;color:#111;font-style:italic;left:1306.30px;width:1500px;text-align:right;">80%</div>
<div class="t" style="top:731.01px;font-size:17px;color:#111111;left:74.30px;">Payroll Expenses</div>
<div class="t" style="top:730.50px;font-size:17.6px;color:#111;left:-839.90px;width:1500px;text-align:right;">(439)</div>
<div class="t" style="top:730.50px;font-size:17.6px;color:#111;left:-719.50px;width:1500px;text-align:right;">(592)</div>
<div class="t" style="top:730.50px;font-size:17.6px;color:#111;left:-599.50px;width:1500px;text-align:right;">(754)</div>
<div class="t" style="top:730.50px;font-size:17.6px;color:#111;left:-479.70px;width:1500px;text-align:right;">(865)</div>
<div class="t" style="top:730.50px;font-size:17.6px;color:#111;left:-359.70px;width:1500px;text-align:right;">(981)</div>
<div class="t" style="top:730.50px;font-size:17.6px;color:#111;left:-191.60px;width:1500px;text-align:right;">(37)</div>
<div class="t" style="top:730.50px;font-size:17.6px;color:#111;left:-54.70px;width:1500px;text-align:right;">(37)</div>
<div class="t" style="top:730.50px;font-size:17.6px;color:#111;left:82.20px;width:1500px;text-align:right;">(37)</div>
<div class="t" style="top:730.50px;font-size:17.6px;color:#111;left:219.10px;width:1500px;text-align:right;">(37)</div>
<div class="t" style="top:730.50px;font-size:17.6px;color:#111;left:356.00px;width:1500px;text-align:right;">(37)</div>
<div class="t" style="top:730.50px;font-size:17.6px;color:#111;left:492.90px;width:1500px;text-align:right;">(37)</div>
<div class="t" style="top:730.50px;font-size:17.6px;color:#111;left:629.80px;width:1500px;text-align:right;">(37)</div>
<div class="t" style="top:730.50px;font-size:17.6px;color:#111;left:766.70px;width:1500px;text-align:right;">(37)</div>
<div class="t" style="top:730.50px;font-size:17.6px;color:#111;left:903.60px;width:1500px;text-align:right;">(37)</div>
<div class="t" style="top:730.50px;font-size:17.6px;color:#111;left:1040.50px;width:1500px;text-align:right;">(37)</div>
<div class="t" style="top:730.50px;font-size:17.6px;color:#111;left:1177.40px;width:1500px;text-align:right;">(37)</div>
<div class="t" style="top:730.50px;font-size:17.6px;color:#111;left:1314.30px;width:1500px;text-align:right;">(37)</div>
<div class="t" style="top:753.69px;font-size:17.5px;color:#111111;font-style:italic;left:92.50px;">% of Revenue</div>
<div class="t" style="top:753.60px;font-size:17.6px;color:#111;font-style:italic;left:-840.90px;width:1500px;text-align:right;">(62%)</div>
<div class="t" style="top:753.60px;font-size:17.6px;color:#111;font-style:italic;left:-720.50px;width:1500px;text-align:right;">(33%)</div>
<div class="t" style="top:753.60px;font-size:17.6px;color:#111;font-style:italic;left:-600.50px;width:1500px;text-align:right;">(22%)</div>
<div class="t" style="top:753.60px;font-size:17.6px;color:#111;font-style:italic;left:-480.70px;width:1500px;text-align:right;">(15%)</div>
<div class="t" style="top:753.60px;font-size:17.6px;color:#111;font-style:italic;left:-360.70px;width:1500px;text-align:right;">(12%)</div>
<div class="t" style="top:753.60px;font-size:17.6px;color:#111;font-style:italic;left:-192.60px;width:1500px;text-align:right;">(62%)</div>
<div class="t" style="top:753.60px;font-size:17.6px;color:#111;font-style:italic;left:-55.70px;width:1500px;text-align:right;">(62%)</div>
<div class="t" style="top:753.60px;font-size:17.6px;color:#111;font-style:italic;left:81.20px;width:1500px;text-align:right;">(62%)</div>
<div class="t" style="top:753.60px;font-size:17.6px;color:#111;font-style:italic;left:218.10px;width:1500px;text-align:right;">(62%)</div>
<div class="t" style="top:753.60px;font-size:17.6px;color:#111;font-style:italic;left:355.00px;width:1500px;text-align:right;">(62%)</div>
<div class="t" style="top:753.60px;font-size:17.6px;color:#111;font-style:italic;left:491.90px;width:1500px;text-align:right;">(62%)</div>
<div class="t" style="top:753.60px;font-size:17.6px;color:#111;font-style:italic;left:628.80px;width:1500px;text-align:right;">(62%)</div>
<div class="t" style="top:753.60px;font-size:17.6px;color:#111;font-style:italic;left:765.70px;width:1500px;text-align:right;">(62%)</div>
<div class="t" style="top:753.60px;font-size:17.6px;color:#111;font-style:italic;left:902.60px;width:1500px;text-align:right;">(62%)</div>
<div class="t" style="top:753.60px;font-size:17.6px;color:#111;font-style:italic;left:1039.50px;width:1500px;text-align:right;">(62%)</div>
<div class="t" style="top:753.60px;font-size:17.6px;color:#111;font-style:italic;left:1176.40px;width:1500px;text-align:right;">(62%)</div>
<div class="t" style="top:753.60px;font-size:17.6px;color:#111;font-style:italic;left:1313.30px;width:1500px;text-align:right;">(62%)</div>
<div class="t" style="top:782.31px;font-size:17px;color:#111111;left:74.30px;">Fixed Expenses</div>
<div class="t" style="top:781.80px;font-size:17.6px;color:#111;left:-839.90px;width:1500px;text-align:right;">(241)</div>
<div class="t" style="top:781.80px;font-size:17.6px;color:#111;left:-719.50px;width:1500px;text-align:right;">(241)</div>
<div class="t" style="top:781.80px;font-size:17.6px;color:#111;left:-599.50px;width:1500px;text-align:right;">(241)</div>
<div class="t" style="top:781.80px;font-size:17.6px;color:#111;left:-479.70px;width:1500px;text-align:right;">(241)</div>
<div class="t" style="top:781.80px;font-size:17.6px;color:#111;left:-359.70px;width:1500px;text-align:right;">(241)</div>
<div class="t" style="top:781.80px;font-size:17.6px;color:#111;left:-191.60px;width:1500px;text-align:right;">(20)</div>
<div class="t" style="top:781.80px;font-size:17.6px;color:#111;left:-54.70px;width:1500px;text-align:right;">(20)</div>
<div class="t" style="top:781.80px;font-size:17.6px;color:#111;left:82.20px;width:1500px;text-align:right;">(20)</div>
<div class="t" style="top:781.80px;font-size:17.6px;color:#111;left:219.10px;width:1500px;text-align:right;">(20)</div>
<div class="t" style="top:781.80px;font-size:17.6px;color:#111;left:356.00px;width:1500px;text-align:right;">(20)</div>
<div class="t" style="top:781.80px;font-size:17.6px;color:#111;left:492.90px;width:1500px;text-align:right;">(20)</div>
<div class="t" style="top:781.80px;font-size:17.6px;color:#111;left:629.80px;width:1500px;text-align:right;">(20)</div>
<div class="t" style="top:781.80px;font-size:17.6px;color:#111;left:766.70px;width:1500px;text-align:right;">(20)</div>
<div class="t" style="top:781.80px;font-size:17.6px;color:#111;left:903.60px;width:1500px;text-align:right;">(20)</div>
<div class="t" style="top:781.80px;font-size:17.6px;color:#111;left:1040.50px;width:1500px;text-align:right;">(20)</div>
<div class="t" style="top:781.80px;font-size:17.6px;color:#111;left:1177.40px;width:1500px;text-align:right;">(20)</div>
<div class="t" style="top:781.80px;font-size:17.6px;color:#111;left:1314.30px;width:1500px;text-align:right;">(20)</div>
<div class="t" style="top:804.69px;font-size:17.5px;color:#111111;font-style:italic;left:92.50px;">% of Revenue</div>
<div class="t" style="top:804.60px;font-size:17.6px;color:#111;font-style:italic;left:-840.90px;width:1500px;text-align:right;">(34%)</div>
<div class="t" style="top:804.60px;font-size:17.6px;color:#111;font-style:italic;left:-720.50px;width:1500px;text-align:right;">(13%)</div>
<div class="t" style="top:804.60px;font-size:17.6px;color:#111;font-style:italic;left:-600.50px;width:1500px;text-align:right;">(7%)</div>
<div class="t" style="top:804.60px;font-size:17.6px;color:#111;font-style:italic;left:-480.70px;width:1500px;text-align:right;">(4%)</div>
<div class="t" style="top:804.60px;font-size:17.6px;color:#111;font-style:italic;left:-360.70px;width:1500px;text-align:right;">(3%)</div>
<div class="t" style="top:804.60px;font-size:17.6px;color:#111;font-style:italic;left:-192.60px;width:1500px;text-align:right;">(34%)</div>
<div class="t" style="top:804.60px;font-size:17.6px;color:#111;font-style:italic;left:-55.70px;width:1500px;text-align:right;">(34%)</div>
<div class="t" style="top:804.60px;font-size:17.6px;color:#111;font-style:italic;left:81.20px;width:1500px;text-align:right;">(34%)</div>
<div class="t" style="top:804.60px;font-size:17.6px;color:#111;font-style:italic;left:218.10px;width:1500px;text-align:right;">(34%)</div>
<div class="t" style="top:804.60px;font-size:17.6px;color:#111;font-style:italic;left:355.00px;width:1500px;text-align:right;">(34%)</div>
<div class="t" style="top:804.60px;font-size:17.6px;color:#111;font-style:italic;left:491.90px;width:1500px;text-align:right;">(34%)</div>
<div class="t" style="top:804.60px;font-size:17.6px;color:#111;font-style:italic;left:628.80px;width:1500px;text-align:right;">(34%)</div>
<div class="t" style="top:804.60px;font-size:17.6px;color:#111;font-style:italic;left:765.70px;width:1500px;text-align:right;">(34%)</div>
<div class="t" style="top:804.60px;font-size:17.6px;color:#111;font-style:italic;left:902.60px;width:1500px;text-align:right;">(34%)</div>
<div class="t" style="top:804.60px;font-size:17.6px;color:#111;font-style:italic;left:1039.50px;width:1500px;text-align:right;">(34%)</div>
<div class="t" style="top:804.60px;font-size:17.6px;color:#111;font-style:italic;left:1176.40px;width:1500px;text-align:right;">(34%)</div>
<div class="t" style="top:804.60px;font-size:17.6px;color:#111;font-style:italic;left:1313.30px;width:1500px;text-align:right;">(34%)</div>
<div class="r" style="left:70.60px;top:828.30px;width:1073.70px;height:26.30px;background:#4bb1e6;"></div>
<div class="r" style="left:1175.50px;top:828.30px;width:1643.90px;height:26.30px;background:#4bb1e6;"></div>
<div class="t" style="top:832.08px;font-size:21.4px;color:#ffffff;font-weight:bold;left:85.60px;">EBITDA</div>
<div class="t" style="top:833.39px;font-size:18.2px;color:#ffffff;font-weight:bold;letter-spacing:0.4px;left:-839.50px;width:1500px;text-align:right;">(113)</div>
<div class="t" style="top:833.39px;font-size:18.2px;color:#ffffff;font-weight:bold;letter-spacing:0.4px;left:-727.00px;width:1500px;text-align:right;">634</div>
<div class="t" style="top:833.39px;font-size:18.2px;color:#ffffff;font-weight:bold;letter-spacing:0.4px;left:-607.00px;width:1500px;text-align:right;">1,831</div>
<div class="t" style="top:833.39px;font-size:18.2px;color:#ffffff;font-weight:bold;letter-spacing:0.4px;left:-487.20px;width:1500px;text-align:right;">3,727</div>
<div class="t" style="top:833.39px;font-size:18.2px;color:#ffffff;font-weight:bold;letter-spacing:0.4px;left:-367.20px;width:1500px;text-align:right;">5,808</div>
<div class="t" style="top:833.39px;font-size:18.2px;color:#ffffff;font-weight:bold;letter-spacing:0.4px;left:-191.20px;width:1500px;text-align:right;">(9)</div>
<div class="t" style="top:833.39px;font-size:18.2px;color:#ffffff;font-weight:bold;letter-spacing:0.4px;left:-54.30px;width:1500px;text-align:right;">(9)</div>
<div class="t" style="top:833.39px;font-size:18.2px;color:#ffffff;font-weight:bold;letter-spacing:0.4px;left:82.60px;width:1500px;text-align:right;">(9)</div>
<div class="t" style="top:833.39px;font-size:18.2px;color:#ffffff;font-weight:bold;letter-spacing:0.4px;left:219.50px;width:1500px;text-align:right;">(9)</div>
<div class="t" style="top:833.39px;font-size:18.2px;color:#ffffff;font-weight:bold;letter-spacing:0.4px;left:356.40px;width:1500px;text-align:right;">(9)</div>
<div class="t" style="top:833.39px;font-size:18.2px;color:#ffffff;font-weight:bold;letter-spacing:0.4px;left:493.30px;width:1500px;text-align:right;">(9)</div>
<div class="t" style="top:833.39px;font-size:18.2px;color:#ffffff;font-weight:bold;letter-spacing:0.4px;left:630.20px;width:1500px;text-align:right;">(9)</div>
<div class="t" style="top:833.39px;font-size:18.2px;color:#ffffff;font-weight:bold;letter-spacing:0.4px;left:767.10px;width:1500px;text-align:right;">(9)</div>
<div class="t" style="top:833.39px;font-size:18.2px;color:#ffffff;font-weight:bold;letter-spacing:0.4px;left:904.00px;width:1500px;text-align:right;">(9)</div>
<div class="t" style="top:833.39px;font-size:18.2px;color:#ffffff;font-weight:bold;letter-spacing:0.4px;left:1040.90px;width:1500px;text-align:right;">(9)</div>
<div class="t" style="top:833.39px;font-size:18.2px;color:#ffffff;font-weight:bold;letter-spacing:0.4px;left:1177.80px;width:1500px;text-align:right;">(9)</div>
<div class="t" style="top:833.39px;font-size:18.2px;color:#ffffff;font-weight:bold;letter-spacing:0.4px;left:1314.70px;width:1500px;text-align:right;">(9)</div>
<div class="t" style="top:858.89px;font-size:17.5px;color:#111111;font-style:italic;left:75.00px;">EBITDA %</div>
<div class="t" style="top:858.80px;font-size:17.6px;color:#111;font-style:italic;left:-840.90px;width:1500px;text-align:right;">(16%)</div>
<div class="t" style="top:858.80px;font-size:17.6px;color:#111;font-style:italic;left:-727.50px;width:1500px;text-align:right;">35%</div>
<div class="t" style="top:858.80px;font-size:17.6px;color:#111;font-style:italic;left:-607.50px;width:1500px;text-align:right;">54%</div>
<div class="t" style="top:858.80px;font-size:17.6px;color:#111;font-style:italic;left:-487.70px;width:1500px;text-align:right;">66%</div>
<div class="t" style="top:858.80px;font-size:17.6px;color:#111;font-style:italic;left:-367.70px;width:1500px;text-align:right;">72%</div>
<div class="t" style="top:858.80px;font-size:17.6px;color:#111;font-style:italic;left:-192.60px;width:1500px;text-align:right;">(16%)</div>
<div class="t" style="top:858.80px;font-size:17.6px;color:#111;font-style:italic;left:-55.70px;width:1500px;text-align:right;">(16%)</div>
<div class="t" style="top:858.80px;font-size:17.6px;color:#111;font-style:italic;left:81.20px;width:1500px;text-align:right;">(16%)</div>
<div class="t" style="top:858.80px;font-size:17.6px;color:#111;font-style:italic;left:218.10px;width:1500px;text-align:right;">(16%)</div>
<div class="t" style="top:858.80px;font-size:17.6px;color:#111;font-style:italic;left:355.00px;width:1500px;text-align:right;">(16%)</div>
<div class="t" style="top:858.80px;font-size:17.6px;color:#111;font-style:italic;left:491.90px;width:1500px;text-align:right;">(16%)</div>
<div class="t" style="top:858.80px;font-size:17.6px;color:#111;font-style:italic;left:628.80px;width:1500px;text-align:right;">(16%)</div>
<div class="t" style="top:858.80px;font-size:17.6px;color:#111;font-style:italic;left:765.70px;width:1500px;text-align:right;">(16%)</div>
<div class="t" style="top:858.80px;font-size:17.6px;color:#111;font-style:italic;left:902.60px;width:1500px;text-align:right;">(16%)</div>
<div class="t" style="top:858.80px;font-size:17.6px;color:#111;font-style:italic;left:1039.50px;width:1500px;text-align:right;">(16%)</div>
<div class="t" style="top:858.80px;font-size:17.6px;color:#111;font-style:italic;left:1176.40px;width:1500px;text-align:right;">(16%)</div>
<div class="t" style="top:858.80px;font-size:17.6px;color:#111;font-style:italic;left:1313.30px;width:1500px;text-align:right;">(16%)</div>
<div class="t" style="top:882.31px;font-size:17px;color:#111111;left:74.30px;">Depreciation &amp; Amortization</div>
<div class="t" style="top:881.80px;font-size:17.6px;color:#111;left:-839.90px;width:1500px;text-align:right;">(32)</div>
<div class="t" style="top:881.80px;font-size:17.6px;color:#111;left:-719.50px;width:1500px;text-align:right;">(40)</div>
<div class="t" style="top:881.80px;font-size:17.6px;color:#111;left:-599.50px;width:1500px;text-align:right;">(40)</div>
<div class="t" style="top:881.80px;font-size:17.6px;color:#111;left:-479.70px;width:1500px;text-align:right;">(40)</div>
<div class="t" style="top:881.80px;font-size:17.6px;color:#111;left:-359.70px;width:1500px;text-align:right;">(40)</div>
<div class="t" style="top:881.80px;font-size:17.6px;color:#111;left:-191.60px;width:1500px;text-align:right;">(1)</div>
<div class="t" style="top:881.80px;font-size:17.6px;color:#111;left:-54.70px;width:1500px;text-align:right;">(1)</div>
<div class="t" style="top:881.80px;font-size:17.6px;color:#111;left:82.20px;width:1500px;text-align:right;">(2)</div>
<div class="t" style="top:881.80px;font-size:17.6px;color:#111;left:219.10px;width:1500px;text-align:right;">(3)</div>
<div class="t" style="top:881.80px;font-size:17.6px;color:#111;left:356.00px;width:1500px;text-align:right;">(3)</div>
<div class="t" style="top:881.80px;font-size:17.6px;color:#111;left:492.90px;width:1500px;text-align:right;">(3)</div>
<div class="t" style="top:881.80px;font-size:17.6px;color:#111;left:629.80px;width:1500px;text-align:right;">(3)</div>
<div class="t" style="top:881.80px;font-size:17.6px;color:#111;left:766.70px;width:1500px;text-align:right;">(3)</div>
<div class="t" style="top:881.80px;font-size:17.6px;color:#111;left:903.60px;width:1500px;text-align:right;">(3)</div>
<div class="t" style="top:881.80px;font-size:17.6px;color:#111;left:1040.50px;width:1500px;text-align:right;">(3)</div>
<div class="t" style="top:881.80px;font-size:17.6px;color:#111;left:1177.40px;width:1500px;text-align:right;">(3)</div>
<div class="t" style="top:881.80px;font-size:17.6px;color:#111;left:1314.30px;width:1500px;text-align:right;">(3)</div>
<div class="t" style="top:905.11px;font-size:17px;color:#111111;left:74.30px;">EBIT</div>
<div class="t" style="top:904.60px;font-size:17.6px;color:#111;left:-839.90px;width:1500px;text-align:right;">(145)</div>
<div class="t" style="top:904.60px;font-size:17.6px;color:#111;left:-726.50px;width:1500px;text-align:right;">594</div>
<div class="t" style="top:904.60px;font-size:17.6px;color:#111;left:-606.50px;width:1500px;text-align:right;">1,791</div>
<div class="t" style="top:904.60px;font-size:17.6px;color:#111;left:-486.70px;width:1500px;text-align:right;">3,687</div>
<div class="t" style="top:904.60px;font-size:17.6px;color:#111;left:-366.70px;width:1500px;text-align:right;">5,768</div>
<div class="t" style="top:904.60px;font-size:17.6px;color:#111;left:-191.60px;width:1500px;text-align:right;">(10)</div>
<div class="t" style="top:904.60px;font-size:17.6px;color:#111;left:-54.70px;width:1500px;text-align:right;">(11)</div>
<div class="t" style="top:904.60px;font-size:17.6px;color:#111;left:82.20px;width:1500px;text-align:right;">(12)</div>
<div class="t" style="top:904.60px;font-size:17.6px;color:#111;left:219.10px;width:1500px;text-align:right;">(12)</div>
<div class="t" style="top:904.60px;font-size:17.6px;color:#111;left:356.00px;width:1500px;text-align:right;">(12)</div>
<div class="t" style="top:904.60px;font-size:17.6px;color:#111;left:492.90px;width:1500px;text-align:right;">(12)</div>
<div class="t" style="top:904.60px;font-size:17.6px;color:#111;left:629.80px;width:1500px;text-align:right;">(12)</div>
<div class="t" style="top:904.60px;font-size:17.6px;color:#111;left:766.70px;width:1500px;text-align:right;">(13)</div>
<div class="t" style="top:904.60px;font-size:17.6px;color:#111;left:903.60px;width:1500px;text-align:right;">(13)</div>
<div class="t" style="top:904.60px;font-size:17.6px;color:#111;left:1040.50px;width:1500px;text-align:right;">(13)</div>
<div class="t" style="top:904.60px;font-size:17.6px;color:#111;left:1177.40px;width:1500px;text-align:right;">(13)</div>
<div class="t" style="top:904.60px;font-size:17.6px;color:#111;left:1314.30px;width:1500px;text-align:right;">(13)</div>
<div class="t" style="top:928.11px;font-size:17px;color:#111111;left:74.30px;">Net Interest Expense</div>
<div class="t" style="top:927.60px;font-size:17.6px;color:#111;left:-839.90px;width:1500px;text-align:right;">(18)</div>
<div class="t" style="top:927.60px;font-size:17.6px;color:#111;left:-719.50px;width:1500px;text-align:right;">(17)</div>
<div class="t" style="top:927.60px;font-size:17.6px;color:#111;left:-599.50px;width:1500px;text-align:right;">(14)</div>
<div class="t" style="top:927.60px;font-size:17.6px;color:#111;left:-479.70px;width:1500px;text-align:right;">(11)</div>
<div class="t" style="top:927.60px;font-size:17.6px;color:#111;left:-359.70px;width:1500px;text-align:right;">(7)</div>
<div class="t" style="top:927.60px;font-size:17.6px;color:#111;left:-191.60px;width:1500px;text-align:right;">(1)</div>
<div class="t" style="top:927.60px;font-size:17.6px;color:#111;left:-54.70px;width:1500px;text-align:right;">(1)</div>
<div class="t" style="top:927.60px;font-size:17.6px;color:#111;left:82.20px;width:1500px;text-align:right;">(2)</div>
<div class="t" style="top:927.60px;font-size:17.6px;color:#111;left:219.10px;width:1500px;text-align:right;">(2)</div>
<div class="t" style="top:927.60px;font-size:17.6px;color:#111;left:356.00px;width:1500px;text-align:right;">(2)</div>
<div class="t" style="top:927.60px;font-size:17.6px;color:#111;left:492.90px;width:1500px;text-align:right;">(2)</div>
<div class="t" style="top:927.60px;font-size:17.6px;color:#111;left:629.80px;width:1500px;text-align:right;">(2)</div>
<div class="t" style="top:927.60px;font-size:17.6px;color:#111;left:766.70px;width:1500px;text-align:right;">(2)</div>
<div class="t" style="top:927.60px;font-size:17.6px;color:#111;left:903.60px;width:1500px;text-align:right;">(2)</div>
<div class="t" style="top:927.60px;font-size:17.6px;color:#111;left:1040.50px;width:1500px;text-align:right;">(2)</div>
<div class="t" style="top:927.60px;font-size:17.6px;color:#111;left:1177.40px;width:1500px;text-align:right;">(2)</div>
<div class="t" style="top:927.60px;font-size:17.6px;color:#111;left:1314.30px;width:1500px;text-align:right;">(2)</div>
<div class="t" style="top:950.91px;font-size:17px;color:#111111;left:74.30px;">Net Profit Before Tax</div>
<div class="t" style="top:950.40px;font-size:17.6px;color:#111;left:-839.90px;width:1500px;text-align:right;">(163)</div>
<div class="t" style="top:950.40px;font-size:17.6px;color:#111;left:-726.50px;width:1500px;text-align:right;">577</div>
<div class="t" style="top:950.40px;font-size:17.6px;color:#111;left:-606.50px;width:1500px;text-align:right;">1,777</div>
<div class="t" style="top:950.40px;font-size:17.6px;color:#111;left:-486.70px;width:1500px;text-align:right;">3,676</div>
<div class="t" style="top:950.40px;font-size:17.6px;color:#111;left:-366.70px;width:1500px;text-align:right;">5,761</div>
<div class="t" style="top:950.40px;font-size:17.6px;color:#111;left:-191.60px;width:1500px;text-align:right;">(11)</div>
<div class="t" style="top:950.40px;font-size:17.6px;color:#111;left:-54.70px;width:1500px;text-align:right;">(12)</div>
<div class="t" style="top:950.40px;font-size:17.6px;color:#111;left:82.20px;width:1500px;text-align:right;">(13)</div>
<div class="t" style="top:950.40px;font-size:17.6px;color:#111;left:219.10px;width:1500px;text-align:right;">(14)</div>
<div class="t" style="top:950.40px;font-size:17.6px;color:#111;left:356.00px;width:1500px;text-align:right;">(14)</div>
<div class="t" style="top:950.40px;font-size:17.6px;color:#111;left:492.90px;width:1500px;text-align:right;">(14)</div>
<div class="t" style="top:950.40px;font-size:17.6px;color:#111;left:629.80px;width:1500px;text-align:right;">(14)</div>
<div class="t" style="top:950.40px;font-size:17.6px;color:#111;left:766.70px;width:1500px;text-align:right;">(14)</div>
<div class="t" style="top:950.40px;font-size:17.6px;color:#111;left:903.60px;width:1500px;text-align:right;">(14)</div>
<div class="t" style="top:950.40px;font-size:17.6px;color:#111;left:1040.50px;width:1500px;text-align:right;">(14)</div>
<div class="t" style="top:950.40px;font-size:17.6px;color:#111;left:1177.40px;width:1500px;text-align:right;">(14)</div>
<div class="t" style="top:950.40px;font-size:17.6px;color:#111;left:1314.30px;width:1500px;text-align:right;">(14)</div>
<div class="t" style="top:973.61px;font-size:17px;color:#111111;left:74.30px;">Tax Expense</div>
<div class="t" style="top:973.10px;font-size:17.6px;color:#111;left:-846.90px;width:1500px;text-align:right;">-</div>
<div class="t" style="top:973.10px;font-size:17.6px;color:#111;left:-719.50px;width:1500px;text-align:right;">(144)</div>
<div class="t" style="top:973.10px;font-size:17.6px;color:#111;left:-599.50px;width:1500px;text-align:right;">(444)</div>
<div class="t" style="top:973.10px;font-size:17.6px;color:#111;left:-479.70px;width:1500px;text-align:right;">(919)</div>
<div class="t" style="top:973.10px;font-size:17.6px;color:#111;left:-359.70px;width:1500px;text-align:right;">(1,440)</div>
<div class="t" style="top:973.10px;font-size:17.6px;color:#111;left:-198.60px;width:1500px;text-align:right;">-</div>
<div class="t" style="top:973.10px;font-size:17.6px;color:#111;left:-61.70px;width:1500px;text-align:right;">-</div>
<div class="t" style="top:973.10px;font-size:17.6px;color:#111;left:75.20px;width:1500px;text-align:right;">-</div>
<div class="t" style="top:973.10px;font-size:17.6px;color:#111;left:212.10px;width:1500px;text-align:right;">-</div>
<div class="t" style="top:973.10px;font-size:17.6px;color:#111;left:349.00px;width:1500px;text-align:right;">-</div>
<div class="t" style="top:973.10px;font-size:17.6px;color:#111;left:485.90px;width:1500px;text-align:right;">-</div>
<div class="t" style="top:973.10px;font-size:17.6px;color:#111;left:622.80px;width:1500px;text-align:right;">-</div>
<div class="t" style="top:973.10px;font-size:17.6px;color:#111;left:759.70px;width:1500px;text-align:right;">-</div>
<div class="t" style="top:973.10px;font-size:17.6px;color:#111;left:896.60px;width:1500px;text-align:right;">-</div>
<div class="t" style="top:973.10px;font-size:17.6px;color:#111;left:1033.50px;width:1500px;text-align:right;">-</div>
<div class="t" style="top:973.10px;font-size:17.6px;color:#111;left:1170.40px;width:1500px;text-align:right;">-</div>
<div class="t" style="top:973.10px;font-size:17.6px;color:#111;left:1307.30px;width:1500px;text-align:right;">-</div>
<div class="r" style="left:70.60px;top:991.90px;width:1073.70px;height:26.30px;background:#4bb1e6;"></div>
<div class="r" style="left:1175.50px;top:991.90px;width:1643.90px;height:26.30px;background:#4bb1e6;"></div>
<div class="t" style="top:995.68px;font-size:21.4px;color:#ffffff;font-weight:bold;left:85.60px;">Net Profit After Tax</div>
<div class="t" style="top:996.99px;font-size:18.2px;color:#ffffff;font-weight:bold;letter-spacing:0.4px;left:-839.50px;width:1500px;text-align:right;">(163)</div>
<div class="t" style="top:996.99px;font-size:18.2px;color:#ffffff;font-weight:bold;letter-spacing:0.4px;left:-727.00px;width:1500px;text-align:right;">433</div>
<div class="t" style="top:996.99px;font-size:18.2px;color:#ffffff;font-weight:bold;letter-spacing:0.4px;left:-607.00px;width:1500px;text-align:right;">1,333</div>
<div class="t" style="top:996.99px;font-size:18.2px;color:#ffffff;font-weight:bold;letter-spacing:0.4px;left:-487.20px;width:1500px;text-align:right;">2,757</div>
<div class="t" style="top:996.99px;font-size:18.2px;color:#ffffff;font-weight:bold;letter-spacing:0.4px;left:-367.20px;width:1500px;text-align:right;">4,321</div>
<div class="t" style="top:996.99px;font-size:18.2px;color:#ffffff;font-weight:bold;letter-spacing:0.4px;left:-191.20px;width:1500px;text-align:right;">(11)</div>
<div class="t" style="top:996.99px;font-size:18.2px;color:#ffffff;font-weight:bold;letter-spacing:0.4px;left:-54.30px;width:1500px;text-align:right;">(12)</div>
<div class="t" style="top:996.99px;font-size:18.2px;color:#ffffff;font-weight:bold;letter-spacing:0.4px;left:82.60px;width:1500px;text-align:right;">(13)</div>
<div class="t" style="top:996.99px;font-size:18.2px;color:#ffffff;font-weight:bold;letter-spacing:0.4px;left:219.50px;width:1500px;text-align:right;">(14)</div>
<div class="t" style="top:996.99px;font-size:18.2px;color:#ffffff;font-weight:bold;letter-spacing:0.4px;left:356.40px;width:1500px;text-align:right;">(14)</div>
<div class="t" style="top:996.99px;font-size:18.2px;color:#ffffff;font-weight:bold;letter-spacing:0.4px;left:493.30px;width:1500px;text-align:right;">(14)</div>
<div class="t" style="top:996.99px;font-size:18.2px;color:#ffffff;font-weight:bold;letter-spacing:0.4px;left:630.20px;width:1500px;text-align:right;">(14)</div>
<div class="t" style="top:996.99px;font-size:18.2px;color:#ffffff;font-weight:bold;letter-spacing:0.4px;left:767.10px;width:1500px;text-align:right;">(14)</div>
<div class="t" style="top:996.99px;font-size:18.2px;color:#ffffff;font-weight:bold;letter-spacing:0.4px;left:904.00px;width:1500px;text-align:right;">(14)</div>
<div class="t" style="top:996.99px;font-size:18.2px;color:#ffffff;font-weight:bold;letter-spacing:0.4px;left:1040.90px;width:1500px;text-align:right;">(14)</div>
<div class="t" style="top:996.99px;font-size:18.2px;color:#ffffff;font-weight:bold;letter-spacing:0.4px;left:1177.80px;width:1500px;text-align:right;">(14)</div>
<div class="t" style="top:996.99px;font-size:18.2px;color:#ffffff;font-weight:bold;letter-spacing:0.4px;left:1314.70px;width:1500px;text-align:right;">(14)</div>
<div class="t" style="top:1022.79px;font-size:17.5px;color:#111111;font-style:italic;left:92.50px;">Net Profit After Tax %</div>
<div class="t" style="top:1022.70px;font-size:17.6px;color:#111;font-style:italic;left:-840.90px;width:1500px;text-align:right;">(23%)</div>
<div class="t" style="top:1022.70px;font-size:17.6px;color:#111;font-style:italic;left:-727.50px;width:1500px;text-align:right;">24%</div>
<div class="t" style="top:1022.70px;font-size:17.6px;color:#111;font-style:italic;left:-607.50px;width:1500px;text-align:right;">39%</div>
<div class="t" style="top:1022.70px;font-size:17.6px;color:#111;font-style:italic;left:-487.70px;width:1500px;text-align:right;">49%</div>
<div class="t" style="top:1022.70px;font-size:17.6px;color:#111;font-style:italic;left:-367.70px;width:1500px;text-align:right;">53%</div>
<div class="t" style="top:1022.70px;font-size:17.6px;color:#111;font-style:italic;left:-192.60px;width:1500px;text-align:right;">(19%)</div>
<div class="t" style="top:1022.70px;font-size:17.6px;color:#111;font-style:italic;left:-55.70px;width:1500px;text-align:right;">(20%)</div>
<div class="t" style="top:1022.70px;font-size:17.6px;color:#111;font-style:italic;left:81.20px;width:1500px;text-align:right;">(23%)</div>
<div class="t" style="top:1022.70px;font-size:17.6px;color:#111;font-style:italic;left:218.10px;width:1500px;text-align:right;">(23%)</div>
<div class="t" style="top:1022.70px;font-size:17.6px;color:#111;font-style:italic;left:355.00px;width:1500px;text-align:right;">(24%)</div>
<div class="t" style="top:1022.70px;font-size:17.6px;color:#111;font-style:italic;left:491.90px;width:1500px;text-align:right;">(24%)</div>
<div class="t" style="top:1022.70px;font-size:17.6px;color:#111;font-style:italic;left:628.80px;width:1500px;text-align:right;">(24%)</div>
<div class="t" style="top:1022.70px;font-size:17.6px;color:#111;font-style:italic;left:765.70px;width:1500px;text-align:right;">(24%)</div>
<div class="t" style="top:1022.70px;font-size:17.6px;color:#111;font-style:italic;left:902.60px;width:1500px;text-align:right;">(24%)</div>
<div class="t" style="top:1022.70px;font-size:17.6px;color:#111;font-style:italic;left:1039.50px;width:1500px;text-align:right;">(24%)</div>
<div class="t" style="top:1022.70px;font-size:17.6px;color:#111;font-style:italic;left:1176.40px;width:1500px;text-align:right;">(24%)</div>
<div class="t" style="top:1022.70px;font-size:17.6px;color:#111;font-style:italic;left:1313.30px;width:1500px;text-align:right;">(24%)</div>
<div class="r" style="left:69.80px;top:1064.90px;width:1074.90px;height:35.60px;background:#4b50d3;"></div>
<div class="t" style="top:1069.15px;font-size:29px;color:#ffffff;font-weight:bold;letter-spacing:0.95px;left:-892.40px;width:3000px;text-align:center;">Income Statement ($&#x27;000) - 5 years to December 2030</div>
<div class="r" style="left:1175.20px;top:1065.20px;width:1644.10px;height:35.20px;background:#4b50d3;"></div>
<div class="t" style="top:1069.15px;font-size:29px;color:#ffffff;font-weight:bold;letter-spacing:0.95px;left:497.50px;width:3000px;text-align:center;">Income Statement ($&#x27;000) - 2026</div>
<div class="r" style="left:70.60px;top:1561.00px;width:1073.70px;height:35.40px;background:#4b50d3;"></div>
<div class="t" style="top:1564.05px;font-size:29px;color:#ffffff;font-weight:bold;letter-spacing:0.95px;left:-892.40px;width:3000px;text-align:center;">Balance Sheet ($&#x27;000) - 5 years to December 2030</div>
<div class="r" style="left:1175.50px;top:1561.00px;width:1643.90px;height:35.40px;background:#4b50d3;"></div>
<div class="t" style="top:1564.05px;font-size:29px;color:#ffffff;font-weight:bold;letter-spacing:0.95px;left:497.50px;width:3000px;text-align:center;">Balance Sheet ($&#x27;000) - 2026</div>
<div class="r" style="left:70.90px;top:1601.20px;width:1073.40px;height:22.60px;background:#6c72e6;"></div>
<div class="r" style="left:543.60px;top:1600.80px;width:1.50px;height:23.00px;background:#ffffff;"></div>
<div class="r" style="left:663.40px;top:1600.80px;width:1.50px;height:23.00px;background:#ffffff;"></div>
<div class="r" style="left:783.80px;top:1600.80px;width:1.50px;height:23.00px;background:#ffffff;"></div>
<div class="r" style="left:903.80px;top:1600.80px;width:1.50px;height:23.00px;background:#ffffff;"></div>
<div class="r" style="left:1023.60px;top:1600.80px;width:1.50px;height:23.00px;background:#ffffff;"></div>
<div class="t" style="top:1604.66px;font-size:18.6px;color:#ffffff;font-weight:bold;left:82.90px;">Year Ending</div>
<div class="t" style="top:1604.49px;font-size:18.8px;color:#ffffff;font-weight:bold;letter-spacing:0.5px;left:-895.80px;width:3000px;text-align:center;">2026</div>
<div class="t" style="top:1604.49px;font-size:18.8px;color:#ffffff;font-weight:bold;letter-spacing:0.5px;left:-775.70px;width:3000px;text-align:center;">2027</div>
<div class="t" style="top:1604.49px;font-size:18.8px;color:#ffffff;font-weight:bold;letter-spacing:0.5px;left:-655.50px;width:3000px;text-align:center;">2028</div>
<div class="t" style="top:1604.49px;font-size:18.8px;color:#ffffff;font-weight:bold;letter-spacing:0.5px;left:-535.60px;width:3000px;text-align:center;">2029</div>
<div class="t" style="top:1604.49px;font-size:18.8px;color:#ffffff;font-weight:bold;letter-spacing:0.5px;left:-415.70px;width:3000px;text-align:center;">2030</div>
<div class="r" style="left:1175.50px;top:1601.20px;width:1643.90px;height:22.60px;background:#6c72e6;"></div>
<div class="r" style="left:1311.70px;top:1600.80px;width:1.50px;height:23.00px;background:#ffffff;"></div>
<div class="r" style="left:1448.60px;top:1600.80px;width:1.50px;height:23.00px;background:#ffffff;"></div>
<div class="r" style="left:1585.50px;top:1600.80px;width:1.50px;height:23.00px;background:#ffffff;"></div>
<div class="r" style="left:1722.40px;top:1600.80px;width:1.50px;height:23.00px;background:#ffffff;"></div>
<div class="r" style="left:1859.30px;top:1600.80px;width:1.50px;height:23.00px;background:#ffffff;"></div>
<div class="r" style="left:1996.20px;top:1600.80px;width:1.50px;height:23.00px;background:#ffffff;"></div>
<div class="r" style="left:2133.10px;top:1600.80px;width:1.50px;height:23.00px;background:#ffffff;"></div>
<div class="r" style="left:2270.00px;top:1600.80px;width:1.50px;height:23.00px;background:#ffffff;"></div>
<div class="r" style="left:2406.90px;top:1600.80px;width:1.50px;height:23.00px;background:#ffffff;"></div>
<div class="r" style="left:2543.80px;top:1600.80px;width:1.50px;height:23.00px;background:#ffffff;"></div>
<div class="r" style="left:2680.70px;top:1600.80px;width:1.50px;height:23.00px;background:#ffffff;"></div>
<div class="t" style="top:1604.49px;font-size:18.8px;color:#ffffff;font-weight:bold;letter-spacing:0.3px;left:-256.05px;width:3000px;text-align:center;">Jan</div>
<div class="t" style="top:1604.49px;font-size:18.8px;color:#ffffff;font-weight:bold;letter-spacing:0.3px;left:-119.15px;width:3000px;text-align:center;">Feb</div>
<div class="t" style="top:1604.49px;font-size:18.8px;color:#ffffff;font-weight:bold;letter-spacing:0.3px;left:17.75px;width:3000px;text-align:center;">Mar</div>
<div class="t" style="top:1604.49px;font-size:18.8px;color:#ffffff;font-weight:bold;letter-spacing:0.3px;left:154.65px;width:3000px;text-align:center;">Apr</div>
<div class="t" style="top:1604.49px;font-size:18.8px;color:#ffffff;font-weight:bold;letter-spacing:0.3px;left:291.55px;width:3000px;text-align:center;">May</div>
<div class="t" style="top:1604.49px;font-size:18.8px;color:#ffffff;font-weight:bold;letter-spacing:0.3px;left:428.45px;width:3000px;text-align:center;">Jun</div>
<div class="t" style="top:1604.49px;font-size:18.8px;color:#ffffff;font-weight:bold;letter-spacing:0.3px;left:565.35px;width:3000px;text-align:center;">Jul</div>
<div class="t" style="top:1604.49px;font-size:18.8px;color:#ffffff;font-weight:bold;letter-spacing:0.3px;left:702.25px;width:3000px;text-align:center;">Aug</div>
<div class="t" style="top:1604.49px;font-size:18.8px;color:#ffffff;font-weight:bold;letter-spacing:0.3px;left:839.15px;width:3000px;text-align:center;">Sep</div>
<div class="t" style="top:1604.49px;font-size:18.8px;color:#ffffff;font-weight:bold;letter-spacing:0.3px;left:976.05px;width:3000px;text-align:center;">Oct</div>
<div class="t" style="top:1604.49px;font-size:18.8px;color:#ffffff;font-weight:bold;letter-spacing:0.3px;left:1112.95px;width:3000px;text-align:center;">Nov</div>
<div class="t" style="top:1604.49px;font-size:18.8px;color:#ffffff;font-weight:bold;letter-spacing:0.3px;left:1249.85px;width:3000px;text-align:center;">Dec</div>
<div class="t" style="top:1633.31px;font-size:17px;color:#111111;left:74.30px;">Current Assets</div>
<div class="t" style="top:1632.80px;font-size:17.6px;color:#111;left:-846.90px;width:1500px;text-align:right;">485</div>
<div class="t" style="top:1632.80px;font-size:17.6px;color:#111;left:-726.50px;width:1500px;text-align:right;">926</div>
<div class="t" style="top:1632.80px;font-size:17.6px;color:#111;left:-606.50px;width:1500px;text-align:right;">2,267</div>
<div class="t" style="top:1632.80px;font-size:17.6px;color:#111;left:-486.70px;width:1500px;text-align:right;">5,031</div>
<div class="t" style="top:1632.80px;font-size:17.6px;color:#111;left:-366.70px;width:1500px;text-align:right;">9,354</div>
<div class="t" style="top:1632.80px;font-size:17.6px;color:#111;left:-198.60px;width:1500px;text-align:right;">849</div>
<div class="t" style="top:1632.80px;font-size:17.6px;color:#111;left:-61.70px;width:1500px;text-align:right;">742</div>
<div class="t" style="top:1632.80px;font-size:17.6px;color:#111;left:75.20px;width:1500px;text-align:right;">733</div>
<div class="t" style="top:1632.80px;font-size:17.6px;color:#111;left:212.10px;width:1500px;text-align:right;">673</div>
<div class="t" style="top:1632.80px;font-size:17.6px;color:#111;left:349.00px;width:1500px;text-align:right;">637</div>
<div class="t" style="top:1632.80px;font-size:17.6px;color:#111;left:485.90px;width:1500px;text-align:right;">612</div>
<div class="t" style="top:1632.80px;font-size:17.6px;color:#111;left:622.80px;width:1500px;text-align:right;">582</div>
<div class="t" style="top:1632.80px;font-size:17.6px;color:#111;left:759.70px;width:1500px;text-align:right;">553</div>
<div class="t" style="top:1632.80px;font-size:17.6px;color:#111;left:896.60px;width:1500px;text-align:right;">524</div>
<div class="t" style="top:1632.80px;font-size:17.6px;color:#111;left:1033.50px;width:1500px;text-align:right;">511</div>
<div class="t" style="top:1632.80px;font-size:17.6px;color:#111;left:1170.40px;width:1500px;text-align:right;">499</div>
<div class="t" style="top:1632.80px;font-size:17.6px;color:#111;left:1307.30px;width:1500px;text-align:right;">485</div>
<div class="t" style="top:1656.31px;font-size:17px;color:#111111;left:74.30px;">Non-Current Assets</div>
<div class="t" style="top:1655.80px;font-size:17.6px;color:#111;left:-846.90px;width:1500px;text-align:right;">368</div>
<div class="t" style="top:1655.80px;font-size:17.6px;color:#111;left:-726.50px;width:1500px;text-align:right;">328</div>
<div class="t" style="top:1655.80px;font-size:17.6px;color:#111;left:-606.50px;width:1500px;text-align:right;">288</div>
<div class="t" style="top:1655.80px;font-size:17.6px;color:#111;left:-486.70px;width:1500px;text-align:right;">248</div>
<div class="t" style="top:1655.80px;font-size:17.6px;color:#111;left:-366.70px;width:1500px;text-align:right;">208</div>
<div class="t" style="top:1655.80px;font-size:17.6px;color:#111;left:-198.60px;width:1500px;text-align:right;">73</div>
<div class="t" style="top:1655.80px;font-size:17.6px;color:#111;left:-61.70px;width:1500px;text-align:right;">171</div>
<div class="t" style="top:1655.80px;font-size:17.6px;color:#111;left:75.20px;width:1500px;text-align:right;">262</div>
<div class="t" style="top:1655.80px;font-size:17.6px;color:#111;left:212.10px;width:1500px;text-align:right;">308</div>
<div class="t" style="top:1655.80px;font-size:17.6px;color:#111;left:349.00px;width:1500px;text-align:right;">327</div>
<div class="t" style="top:1655.80px;font-size:17.6px;color:#111;left:485.90px;width:1500px;text-align:right;">337</div>
<div class="t" style="top:1655.80px;font-size:17.6px;color:#111;left:622.80px;width:1500px;text-align:right;">351</div>
<div class="t" style="top:1655.80px;font-size:17.6px;color:#111;left:759.70px;width:1500px;text-align:right;">364</div>
<div class="t" style="top:1655.80px;font-size:17.6px;color:#111;left:896.60px;width:1500px;text-align:right;">378</div>
<div class="t" style="top:1655.80px;font-size:17.6px;color:#111;left:1033.50px;width:1500px;text-align:right;">374</div>
<div class="t" style="top:1655.80px;font-size:17.6px;color:#111;left:1170.40px;width:1500px;text-align:right;">371</div>
<div class="t" style="top:1655.80px;font-size:17.6px;color:#111;left:1307.30px;width:1500px;text-align:right;">368</div>
<svg class="r" style="left:0;top:0" width="2902" height="1762" viewBox="0 0 2902 1762"><line x1="69.8" y1="1159.00" x2="1043.3" y2="1159.00" stroke="#4ba8d4" stroke-width="1.3"/><line x1="69.8" y1="1192.73" x2="1043.3" y2="1192.73" stroke="#4ba8d4" stroke-width="1.3"/><line x1="69.8" y1="1226.46" x2="1043.3" y2="1226.46" stroke="#4ba8d4" stroke-width="1.3"/><line x1="69.8" y1="1260.19" x2="1043.3" y2="1260.19" stroke="#4ba8d4" stroke-width="1.3"/><line x1="69.8" y1="1293.92" x2="1043.3" y2="1293.92" stroke="#4ba8d4" stroke-width="1.3"/><line x1="69.8" y1="1327.65" x2="1043.3" y2="1327.65" stroke="#4ba8d4" stroke-width="1.3"/><line x1="69.8" y1="1361.38" x2="1043.3" y2="1361.38" stroke="#4ba8d4" stroke-width="1.3"/><line x1="69.8" y1="1395.11" x2="1043.3" y2="1395.11" stroke="#4ba8d4" stroke-width="1.3"/><line x1="69.8" y1="1428.84" x2="1043.3" y2="1428.84" stroke="#4ba8d4" stroke-width="1.3"/><line x1="69.8" y1="1462.57" x2="1043.3" y2="1462.57" stroke="#3d6f9e" stroke-width="1.3"/><line x1="69.8" y1="1496.30" x2="1043.3" y2="1496.30" stroke="#4ba8d4" stroke-width="2.0"/><line x1="69.80" y1="1159.0" x2="69.80" y2="1496.3" stroke="#4ba8d4" stroke-width="1.3"/><line x1="264.50" y1="1159.0" x2="264.50" y2="1496.3" stroke="#4ba8d4" stroke-width="1.3"/><line x1="459.20" y1="1159.0" x2="459.20" y2="1496.3" stroke="#4ba8d4" stroke-width="1.3"/><line x1="653.90" y1="1159.0" x2="653.90" y2="1496.3" stroke="#4ba8d4" stroke-width="1.3"/><line x1="848.60" y1="1159.0" x2="848.60" y2="1496.3" stroke="#4ba8d4" stroke-width="1.3"/><line x1="1043.30" y1="1159.0" x2="1043.30" y2="1496.3" stroke="#4ba8d4" stroke-width="1.3"/><polyline points="167.15,1438.69 361.85,1401.99 556.55,1348.26 751.25,1271.02 945.95,1189.36" fill="none" stroke="#e8766c" stroke-width="2.9" stroke-linejoin="round"/><circle cx="167.15" cy="1438.69" r="5.3" fill="#e8766c"/><circle cx="361.85" cy="1401.99" r="5.3" fill="#e8766c"/><circle cx="556.55" cy="1348.26" r="5.3" fill="#e8766c"/><circle cx="751.25" cy="1271.02" r="5.3" fill="#e8766c"/><circle cx="945.95" cy="1189.36" r="5.3" fill="#e8766c"/><polyline points="167.15,1466.38 361.85,1441.19 556.55,1400.81 751.25,1336.86 945.95,1266.67" fill="none" stroke="#5e9c3f" stroke-width="2.9" stroke-linejoin="round"/><circle cx="167.15" cy="1466.38" r="5.3" fill="#5e9c3f"/><circle cx="361.85" cy="1441.19" r="5.3" fill="#5e9c3f"/><circle cx="556.55" cy="1400.81" r="5.3" fill="#5e9c3f"/><circle cx="751.25" cy="1336.86" r="5.3" fill="#5e9c3f"/><circle cx="945.95" cy="1266.67" r="5.3" fill="#5e9c3f"/><polyline points="167.15,1468.07 361.85,1447.96 556.55,1417.61 751.25,1369.58 945.95,1316.82" fill="none" stroke="#4b50d3" stroke-width="2.9" stroke-linejoin="round"/><circle cx="167.15" cy="1468.07" r="5.3" fill="#4b50d3"/><circle cx="361.85" cy="1447.96" r="5.3" fill="#4b50d3"/><circle cx="556.55" cy="1417.61" r="5.3" fill="#4b50d3"/><circle cx="751.25" cy="1369.58" r="5.3" fill="#4b50d3"/><circle cx="945.95" cy="1316.82" r="5.3" fill="#4b50d3"/></svg>
<div class="t" style="top:1151.43px;font-size:17.8px;color:#111111;font-weight:bold;letter-spacing:1.5px;left:-380.90px;width:1500px;text-align:right;">9,000</div>
<div class="t" style="top:1185.16px;font-size:17.8px;color:#111111;font-weight:bold;letter-spacing:1.5px;left:-380.90px;width:1500px;text-align:right;">8,000</div>
<div class="t" style="top:1218.89px;font-size:17.8px;color:#111111;font-weight:bold;letter-spacing:1.5px;left:-380.90px;width:1500px;text-align:right;">7,000</div>
<div class="t" style="top:1252.62px;font-size:17.8px;color:#111111;font-weight:bold;letter-spacing:1.5px;left:-380.90px;width:1500px;text-align:right;">6,000</div>
<div class="t" style="top:1286.35px;font-size:17.8px;color:#111111;font-weight:bold;letter-spacing:1.5px;left:-380.90px;width:1500px;text-align:right;">5,000</div>
<div class="t" style="top:1320.08px;font-size:17.8px;color:#111111;font-weight:bold;letter-spacing:1.5px;left:-380.90px;width:1500px;text-align:right;">4,000</div>
<div class="t" style="top:1353.81px;font-size:17.8px;color:#111111;font-weight:bold;letter-spacing:1.5px;left:-380.90px;width:1500px;text-align:right;">3,000</div>
<div class="t" style="top:1387.54px;font-size:17.8px;color:#111111;font-weight:bold;letter-spacing:1.5px;left:-380.90px;width:1500px;text-align:right;">2,000</div>
<div class="t" style="top:1421.27px;font-size:17.8px;color:#111111;font-weight:bold;letter-spacing:1.5px;left:-380.90px;width:1500px;text-align:right;">1,000</div>
<div class="t" style="top:1455.00px;font-size:17.8px;color:#111111;font-weight:bold;left:-431.00px;width:3000px;text-align:center;">-</div>
<div class="t" style="top:1488.73px;font-size:17.8px;color:#111111;font-weight:bold;letter-spacing:1.5px;left:-368.00px;width:1500px;text-align:right;">(1,000)</div>
<div class="t" style="top:1511.53px;font-size:17.8px;color:#111111;font-weight:bold;letter-spacing:1.9px;left:-1332.85px;width:3000px;text-align:center;">2026</div>
<div class="t" style="top:1511.53px;font-size:17.8px;color:#111111;font-weight:bold;letter-spacing:1.9px;left:-1138.15px;width:3000px;text-align:center;">2027</div>
<div class="t" style="top:1511.53px;font-size:17.8px;color:#111111;font-weight:bold;letter-spacing:1.9px;left:-943.45px;width:3000px;text-align:center;">2028</div>
<div class="t" style="top:1511.53px;font-size:17.8px;color:#111111;font-weight:bold;letter-spacing:1.9px;left:-748.75px;width:3000px;text-align:center;">2029</div>
<div class="t" style="top:1511.53px;font-size:17.8px;color:#111111;font-weight:bold;letter-spacing:1.9px;left:-554.05px;width:3000px;text-align:center;">2030</div>
<div class="r" style="left:328.40px;top:1130.20px;width:45.00px;height:2.60px;background:#e8766c;"></div>
<svg class="r" style="left:346.40px;top:1127px" width="9" height="9"><circle cx="4.5" cy="4.5" r="4" fill="#e8766c"/></svg>
<div class="t" style="top:1122.53px;font-size:17.8px;color:#111111;font-weight:bold;letter-spacing:0.95px;left:378.00px;">Revenue</div>
<div class="r" style="left:489.20px;top:1130.20px;width:46.40px;height:2.60px;background:#5e9c3f;"></div>
<svg class="r" style="left:507.90px;top:1127px" width="9" height="9"><circle cx="4.5" cy="4.5" r="4" fill="#5e9c3f"/></svg>
<div class="t" style="top:1122.53px;font-size:17.8px;color:#111111;font-weight:bold;letter-spacing:0.95px;left:544.60px;">EBITDA</div>
<div class="r" style="left:652.30px;top:1130.20px;width:46.40px;height:2.60px;background:#4b50d3;"></div>
<svg class="r" style="left:671.00px;top:1127px" width="9" height="9"><circle cx="4.5" cy="4.5" r="4" fill="#4b50d3"/></svg>
<div class="t" style="top:1122.53px;font-size:17.8px;color:#111111;font-weight:bold;letter-spacing:0.95px;left:706.80px;">Net Profit After Tax</div>
<svg class="r" style="left:0;top:0" width="2902" height="1762" viewBox="0 0 2902 1762"><line x1="1175.2" y1="1159.00" x2="2751.8" y2="1159.00" stroke="#4ba8d4" stroke-width="1.3"/><line x1="1175.2" y1="1196.48" x2="2751.8" y2="1196.48" stroke="#4ba8d4" stroke-width="1.3"/><line x1="1175.2" y1="1233.96" x2="2751.8" y2="1233.96" stroke="#4ba8d4" stroke-width="1.3"/><line x1="1175.2" y1="1271.43" x2="2751.8" y2="1271.43" stroke="#4ba8d4" stroke-width="1.3"/><line x1="1175.2" y1="1308.91" x2="2751.8" y2="1308.91" stroke="#4ba8d4" stroke-width="1.3"/><line x1="1175.2" y1="1346.39" x2="2751.8" y2="1346.39" stroke="#4ba8d4" stroke-width="1.3"/><line x1="1175.2" y1="1383.87" x2="2751.8" y2="1383.87" stroke="#4ba8d4" stroke-width="1.3"/><line x1="1175.2" y1="1421.34" x2="2751.8" y2="1421.34" stroke="#4ba8d4" stroke-width="1.3"/><line x1="1175.2" y1="1458.82" x2="2751.8" y2="1458.82" stroke="#4ba8d4" stroke-width="1.3"/><line x1="1175.2" y1="1496.30" x2="2751.8" y2="1496.30" stroke="#4ba8d4" stroke-width="2.0"/><line x1="1175.20" y1="1159.0" x2="1175.20" y2="1496.3" stroke="#4ba8d4" stroke-width="1.3"/><line x1="1306.58" y1="1159.0" x2="1306.58" y2="1496.3" stroke="#4ba8d4" stroke-width="1.3"/><line x1="1437.97" y1="1159.0" x2="1437.97" y2="1496.3" stroke="#4ba8d4" stroke-width="1.3"/><line x1="1569.35" y1="1159.0" x2="1569.35" y2="1496.3" stroke="#4ba8d4" stroke-width="1.3"/><line x1="1700.73" y1="1159.0" x2="1700.73" y2="1496.3" stroke="#4ba8d4" stroke-width="1.3"/><line x1="1832.12" y1="1159.0" x2="1832.12" y2="1496.3" stroke="#4ba8d4" stroke-width="1.3"/><line x1="1963.50" y1="1159.0" x2="1963.50" y2="1496.3" stroke="#4ba8d4" stroke-width="1.3"/><line x1="2094.88" y1="1159.0" x2="2094.88" y2="1496.3" stroke="#4ba8d4" stroke-width="1.3"/><line x1="2226.27" y1="1159.0" x2="2226.27" y2="1496.3" stroke="#4ba8d4" stroke-width="1.3"/><line x1="2357.65" y1="1159.0" x2="2357.65" y2="1496.3" stroke="#4ba8d4" stroke-width="1.3"/><line x1="2489.03" y1="1159.0" x2="2489.03" y2="1496.3" stroke="#4ba8d4" stroke-width="1.3"/><line x1="2620.42" y1="1159.0" x2="2620.42" y2="1496.3" stroke="#4ba8d4" stroke-width="1.3"/><line x1="2751.80" y1="1159.0" x2="2751.80" y2="1496.3" stroke="#4ba8d4" stroke-width="1.3"/><polyline points="1240.89,1200.23 1372.28,1200.23 1503.66,1200.23 1635.04,1200.23 1766.43,1200.23 1897.81,1200.23 2029.19,1200.23 2160.58,1200.23 2291.96,1200.23 2423.34,1200.23 2554.73,1200.23 2686.11,1200.23" fill="none" stroke="#e8766c" stroke-width="2.9" stroke-linejoin="round"/><circle cx="1240.89" cy="1200.23" r="5.3" fill="#e8766c"/><circle cx="1372.28" cy="1200.23" r="5.3" fill="#e8766c"/><circle cx="1503.66" cy="1200.23" r="5.3" fill="#e8766c"/><circle cx="1635.04" cy="1200.23" r="5.3" fill="#e8766c"/><circle cx="1766.43" cy="1200.23" r="5.3" fill="#e8766c"/><circle cx="1897.81" cy="1200.23" r="5.3" fill="#e8766c"/><circle cx="2029.19" cy="1200.23" r="5.3" fill="#e8766c"/><circle cx="2160.58" cy="1200.23" r="5.3" fill="#e8766c"/><circle cx="2291.96" cy="1200.23" r="5.3" fill="#e8766c"/><circle cx="2423.34" cy="1200.23" r="5.3" fill="#e8766c"/><circle cx="2554.73" cy="1200.23" r="5.3" fill="#e8766c"/><circle cx="2686.11" cy="1200.23" r="5.3" fill="#e8766c"/><polyline points="1240.89,1456.57 1372.28,1456.57 1503.66,1456.57 1635.04,1456.57 1766.43,1456.57 1897.81,1456.57 2029.19,1456.57 2160.58,1456.57 2291.96,1456.57 2423.34,1456.57 2554.73,1456.57 2686.11,1456.57" fill="none" stroke="#5e9c3f" stroke-width="2.9" stroke-linejoin="round"/><circle cx="1240.89" cy="1456.57" r="5.3" fill="#5e9c3f"/><circle cx="1372.28" cy="1456.57" r="5.3" fill="#5e9c3f"/><circle cx="1503.66" cy="1456.57" r="5.3" fill="#5e9c3f"/><circle cx="1635.04" cy="1456.57" r="5.3" fill="#5e9c3f"/><circle cx="1766.43" cy="1456.57" r="5.3" fill="#5e9c3f"/><circle cx="1897.81" cy="1456.57" r="5.3" fill="#5e9c3f"/><circle cx="2029.19" cy="1456.57" r="5.3" fill="#5e9c3f"/><circle cx="2160.58" cy="1456.57" r="5.3" fill="#5e9c3f"/><circle cx="2291.96" cy="1456.57" r="5.3" fill="#5e9c3f"/><circle cx="2423.34" cy="1456.57" r="5.3" fill="#5e9c3f"/><circle cx="2554.73" cy="1456.57" r="5.3" fill="#5e9c3f"/><circle cx="2686.11" cy="1456.57" r="5.3" fill="#5e9c3f"/><polyline points="1240.89,1462.57 1372.28,1465.94 1503.66,1470.82 1635.04,1473.06 1766.43,1473.06 1897.81,1473.81 2029.19,1473.81 2160.58,1474.19 2291.96,1474.19 2423.34,1474.19 2554.73,1474.56 2686.11,1474.56" fill="none" stroke="#4b50d3" stroke-width="2.9" stroke-linejoin="round"/><circle cx="1240.89" cy="1462.57" r="5.3" fill="#4b50d3"/><circle cx="1372.28" cy="1465.94" r="5.3" fill="#4b50d3"/><circle cx="1503.66" cy="1470.82" r="5.3" fill="#4b50d3"/><circle cx="1635.04" cy="1473.06" r="5.3" fill="#4b50d3"/><circle cx="1766.43" cy="1473.06" r="5.3" fill="#4b50d3"/><circle cx="1897.81" cy="1473.81" r="5.3" fill="#4b50d3"/><circle cx="2029.19" cy="1473.81" r="5.3" fill="#4b50d3"/><circle cx="2160.58" cy="1474.19" r="5.3" fill="#4b50d3"/><circle cx="2291.96" cy="1474.19" r="5.3" fill="#4b50d3"/><circle cx="2423.34" cy="1474.19" r="5.3" fill="#4b50d3"/><circle cx="2554.73" cy="1474.56" r="5.3" fill="#4b50d3"/><circle cx="2686.11" cy="1474.56" r="5.3" fill="#4b50d3"/></svg>
<div class="t" style="top:1151.43px;font-size:17.8px;color:#111111;font-weight:bold;letter-spacing:1.5px;left:1299.10px;width:1500px;text-align:right;">70</div>
<div class="t" style="top:1188.91px;font-size:17.8px;color:#111111;font-weight:bold;letter-spacing:1.5px;left:1299.10px;width:1500px;text-align:right;">60</div>
<div class="t" style="top:1226.39px;font-size:17.8px;color:#111111;font-weight:bold;letter-spacing:1.5px;left:1299.10px;width:1500px;text-align:right;">50</div>
<div class="t" style="top:1263.87px;font-size:17.8px;color:#111111;font-weight:bold;letter-spacing:1.5px;left:1299.10px;width:1500px;text-align:right;">40</div>
<div class="t" style="top:1301.34px;font-size:17.8px;color:#111111;font-weight:bold;letter-spacing:1.5px;left:1299.10px;width:1500px;text-align:right;">30</div>
<div class="t" style="top:1338.82px;font-size:17.8px;color:#111111;font-weight:bold;letter-spacing:1.5px;left:1299.10px;width:1500px;text-align:right;">20</div>
<div class="t" style="top:1376.30px;font-size:17.8px;color:#111111;font-weight:bold;letter-spacing:1.5px;left:1299.10px;width:1500px;text-align:right;">10</div>
<div class="t" style="top:1413.78px;font-size:17.8px;color:#111111;font-weight:bold;left:1277.00px;width:3000px;text-align:center;">-</div>
<div class="t" style="top:1451.25px;font-size:17.8px;color:#111111;font-weight:bold;letter-spacing:1.5px;left:1311.00px;width:1500px;text-align:right;">(10)</div>
<div class="t" style="top:1488.73px;font-size:17.8px;color:#111111;font-weight:bold;letter-spacing:1.5px;left:1311.00px;width:1500px;text-align:right;">(20)</div>
<div class="t" style="top:1511.53px;font-size:17.8px;color:#111111;font-weight:bold;letter-spacing:1.9px;left:-259.11px;width:3000px;text-align:center;">Jan</div>
<div class="t" style="top:1511.53px;font-size:17.8px;color:#111111;font-weight:bold;letter-spacing:1.9px;left:-127.72px;width:3000px;text-align:center;">Feb</div>
<div class="t" style="top:1511.53px;font-size:17.8px;color:#111111;font-weight:bold;letter-spacing:1.9px;left:3.66px;width:3000px;text-align:center;">Mar</div>
<div class="t" style="top:1511.53px;font-size:17.8px;color:#111111;font-weight:bold;letter-spacing:1.9px;left:135.04px;width:3000px;text-align:center;">Apr</div>
<div class="t" style="top:1511.53px;font-size:17.8px;color:#111111;font-weight:bold;letter-spacing:1.9px;left:266.43px;width:3000px;text-align:center;">May</div>
<div class="t" style="top:1511.53px;font-size:17.8px;color:#111111;font-weight:bold;letter-spacing:1.9px;left:397.81px;width:3000px;text-align:center;">Jun</div>
<div class="t" style="top:1511.53px;font-size:17.8px;color:#111111;font-weight:bold;letter-spacing:1.9px;left:529.19px;width:3000px;text-align:center;">Jul</div>
<div class="t" style="top:1511.53px;font-size:17.8px;color:#111111;font-weight:bold;letter-spacing:1.9px;left:660.58px;width:3000px;text-align:center;">Aug</div>
<div class="t" style="top:1511.53px;font-size:17.8px;color:#111111;font-weight:bold;letter-spacing:1.9px;left:791.96px;width:3000px;text-align:center;">Sep</div>
<div class="t" style="top:1511.53px;font-size:17.8px;color:#111111;font-weight:bold;letter-spacing:1.9px;left:923.34px;width:3000px;text-align:center;">Oct</div>
<div class="t" style="top:1511.53px;font-size:17.8px;color:#111111;font-weight:bold;letter-spacing:1.9px;left:1054.73px;width:3000px;text-align:center;">Nov</div>
<div class="t" style="top:1511.53px;font-size:17.8px;color:#111111;font-weight:bold;letter-spacing:1.9px;left:1186.11px;width:3000px;text-align:center;">Dec</div>
<div class="r" style="left:1719.00px;top:1130.20px;width:45.00px;height:2.60px;background:#e8766c;"></div>
<svg class="r" style="left:1737.00px;top:1127px" width="9" height="9"><circle cx="4.5" cy="4.5" r="4" fill="#e8766c"/></svg>
<div class="t" style="top:1122.53px;font-size:17.8px;color:#111111;font-weight:bold;letter-spacing:0.95px;left:1768.00px;">Revenue</div>
<div class="r" style="left:1879.00px;top:1130.20px;width:47.00px;height:2.60px;background:#5e9c3f;"></div>
<svg class="r" style="left:1898.00px;top:1127px" width="9" height="9"><circle cx="4.5" cy="4.5" r="4" fill="#5e9c3f"/></svg>
<div class="t" style="top:1122.53px;font-size:17.8px;color:#111111;font-weight:bold;letter-spacing:0.95px;left:1934.00px;">EBITDA</div>
<div class="r" style="left:2042.00px;top:1130.20px;width:47.60px;height:2.60px;background:#4b50d3;"></div>
<svg class="r" style="left:2061.30px;top:1127px" width="9" height="9"><circle cx="4.5" cy="4.5" r="4" fill="#4b50d3"/></svg>
<div class="t" style="top:1122.53px;font-size:17.8px;color:#111111;font-weight:bold;letter-spacing:0.95px;left:2097.00px;">Net Profit After Tax</div>
<div class="r" style="left:2860.00px;top:277.30px;width:31.00px;height:1392.90px;background:#0a0a0a;"></div>
<div class="r" style="left:2861.00px;top:279.00px;width:29.00px;height:1391.20px;background:#151515;border-radius:10px 10px 0 0;"></div>
<svg class="r" style="left:2866px;top:283px" width="20" height="14"><path d="M10 2 L17 12 H3 Z" fill="#9a9a9a" stroke="#9a9a9a" stroke-width="1.5" stroke-linejoin="round"/></svg>
<div class="r" style="left:2870.00px;top:304.50px;width:12.20px;height:528.50px;background:#8c8c8c;border-radius:6px;"></div>
<svg class="r" style="left:2866px;top:1652px" width="20" height="14"><path d="M3 2 H17 L10 12 Z" fill="#9a9a9a" stroke="#9a9a9a" stroke-width="1.5" stroke-linejoin="round"/></svg>
<div class="r" style="left:11.00px;top:1670.20px;width:2880.00px;height:48.10px;background:#0a0a0a;"></div>
<svg class="r" style="left:44px;top:1685px" width="14" height="22"><path d="M11 2 L3 11 L11 20" stroke="#9a9a9a" stroke-width="1.8" fill="none"/></svg>
<svg class="r" style="left:93px;top:1685px" width="14" height="22"><path d="M3 2 L11 11 L3 20" stroke="#e0e0e0" stroke-width="1.8" fill="none"/></svg>
<div class="t" style="top:1685.74px;font-size:19.8px;color:#ffffff;left:-1268.70px;width:3000px;text-align:center;">Contents</div>
<div class="r" style="left:299.00px;top:1675.80px;width:127.40px;height:35.20px;background:#ffea6b;border-radius:7px;"></div>
<div class="t" style="top:1685.74px;font-size:19.8px;color:#111111;left:-1137.30px;width:3000px;text-align:center;">Dashboard</div>
<div class="r" style="left:440.00px;top:1675.80px;width:105.50px;height:35.20px;background:#ffea6b;border-radius:7px;"></div>
<div class="t" style="top:1685.74px;font-size:19.8px;color:#111111;left:-1007.25px;width:3000px;text-align:center;">Revenue</div>
<div class="r" style="left:559.00px;top:1675.80px;width:157.40px;height:35.20px;background:#ffea6b;border-radius:7px;"></div>
<div class="t" style="top:1685.74px;font-size:19.8px;color:#111111;left:-862.30px;width:3000px;text-align:center;">COGS &amp; OPEX</div>
<div class="r" style="left:730.00px;top:1675.80px;width:88.00px;height:35.20px;background:#ffea6b;border-radius:7px;"></div>
<div class="t" style="top:1685.74px;font-size:19.8px;color:#111111;left:-726.00px;width:3000px;text-align:center;">Payroll</div>
<div class="r" style="left:831.80px;top:1675.80px;width:86.80px;height:35.20px;background:#ffea6b;border-radius:7px;"></div>
<div class="t" style="top:1685.74px;font-size:19.8px;color:#111111;left:-624.80px;width:3000px;text-align:center;">CAPEX</div>
<div class="r" style="left:931.80px;top:1675.80px;width:112.70px;height:35.20px;background:#ffea6b;border-radius:7px;"></div>
<div class="t" style="top:1685.74px;font-size:19.8px;color:#111111;left:-511.85px;width:3000px;text-align:center;">CapTable</div>
<div class="r" style="left:1058.00px;top:1675.80px;width:89.70px;height:35.20px;background:#ffea6b;border-radius:7px;"></div>
<div class="t" style="top:1685.74px;font-size:19.8px;color:#111111;left:-397.15px;width:3000px;text-align:center;">Capital</div>
<div class="r" style="left:1161.40px;top:1675.80px;width:40.90px;height:35.20px;background:#4bb1e6;border-radius:7px;"></div>
<div class="t" style="top:1685.74px;font-size:19.8px;color:#111111;left:-318.15px;width:3000px;text-align:center;">IS</div>
<div class="r" style="left:1216.40px;top:1675.80px;width:47.50px;height:35.20px;background:#4bb1e6;border-radius:7px;"></div>
<div class="t" style="top:1685.74px;font-size:19.8px;color:#111111;left:-259.85px;width:3000px;text-align:center;">CF</div>
<div class="r" style="left:1277.00px;top:1675.80px;width:48.00px;height:35.20px;background:#4bb1e6;border-radius:7px;"></div>
<div class="t" style="top:1685.74px;font-size:19.8px;color:#111111;left:-199.00px;width:3000px;text-align:center;">BS</div>
<div class="r" style="left:1338.00px;top:1675.80px;width:114.80px;height:35.20px;background:#4bb1e6;border-radius:7px;"></div>
<div class="t" style="top:1685.74px;font-size:19.8px;color:#111111;left:-104.60px;width:3000px;text-align:center;">Scenarios</div>
<div class="r" style="left:1466.00px;top:1675.80px;width:114.20px;height:35.20px;background:#4bb1e6;border-radius:7px;"></div>
<div class="t" style="top:1685.74px;font-size:19.8px;color:#111111;left:23.10px;width:3000px;text-align:center;">Valuation</div>
<div class="r" style="left:1590.80px;top:1670.20px;width:121.00px;height:40.80px;background:#ffffff;border-radius:0 0 8px 8px;background:linear-gradient(#ffffff 55%, #cfe8f7);"></div>
<div class="t" style="top:1681.74px;font-size:19.8px;color:#111111;left:151.30px;width:3000px;text-align:center;">Summary</div>
<div class="r" style="left:1601.80px;top:1705.50px;width:99.00px;height:2.80px;background:#1e7a45;border-radius:1px;"></div>
<div class="r" style="left:1720.50px;top:1675.80px;width:47.90px;height:35.20px;background:#4bb1e6;border-radius:7px;"></div>
<div class="t" style="top:1685.74px;font-size:19.8px;color:#111111;left:244.45px;width:3000px;text-align:center;">BE</div>
<div class="r" style="left:1782.00px;top:1675.80px;width:71.70px;height:35.20px;background:#4bb1e6;border-radius:7px;"></div>
<div class="t" style="top:1685.74px;font-size:19.8px;color:#111111;left:317.85px;width:3000px;text-align:center;">ROIC</div>
<div class="r" style="left:1866.50px;top:1675.80px;width:85.00px;height:35.20px;background:#4bb1e6;border-radius:7px;"></div>
<div class="t" style="top:1685.74px;font-size:19.8px;color:#111111;left:409.00px;width:3000px;text-align:center;">Charts</div>
<div class="r" style="left:1964.70px;top:1675.80px;width:64.30px;height:35.20px;background:#4bb1e6;border-radius:7px;"></div>
<div class="t" style="top:1685.74px;font-size:19.8px;color:#111111;left:496.85px;width:3000px;text-align:center;">KPIs</div>
<div class="r" style="left:2041.80px;top:1675.80px;width:30.10px;height:35.20px;background:#4bb1e6;border-radius:7px 0 0 7px;"></div>
<div class="t" style="top:1685.99px;font-size:19.5px;color:#111111;left:2048.80px;width:23px;overflow:hidden;">Sc</div>
<div class="r" style="left:292.00px;top:1681.00px;width:1.20px;height:25.00px;background:#4a4a4a;"></div>
<div class="r" style="left:433.20px;top:1681.00px;width:1.20px;height:25.00px;background:#4a4a4a;"></div>
<div class="r" style="left:552.30px;top:1681.00px;width:1.20px;height:25.00px;background:#4a4a4a;"></div>
<div class="r" style="left:723.20px;top:1681.00px;width:1.20px;height:25.00px;background:#4a4a4a;"></div>
<div class="r" style="left:824.80px;top:1681.00px;width:1.20px;height:25.00px;background:#4a4a4a;"></div>
<div class="r" style="left:925.40px;top:1681.00px;width:1.20px;height:25.00px;background:#4a4a4a;"></div>
<div class="r" style="left:1051.30px;top:1681.00px;width:1.20px;height:25.00px;background:#4a4a4a;"></div>
<div class="r" style="left:1154.50px;top:1681.00px;width:1.20px;height:25.00px;background:#4a4a4a;"></div>
<div class="r" style="left:1209.10px;top:1681.00px;width:1.20px;height:25.00px;background:#4a4a4a;"></div>
<div class="r" style="left:1270.70px;top:1681.00px;width:1.20px;height:25.00px;background:#4a4a4a;"></div>
<div class="r" style="left:1331.80px;top:1681.00px;width:1.20px;height:25.00px;background:#4a4a4a;"></div>
<div class="r" style="left:1459.60px;top:1681.00px;width:1.20px;height:25.00px;background:#4a4a4a;"></div>
<div class="r" style="left:1775.20px;top:1681.00px;width:1.20px;height:25.00px;background:#4a4a4a;"></div>
<div class="r" style="left:1860.50px;top:1681.00px;width:1.20px;height:25.00px;background:#4a4a4a;"></div>
<div class="r" style="left:1958.30px;top:1681.00px;width:1.20px;height:25.00px;background:#4a4a4a;"></div>
<div class="r" style="left:2035.80px;top:1681.00px;width:1.20px;height:25.00px;background:#4a4a4a;"></div>
<div class="r" style="left:2087.70px;top:1693.00px;width:3.60px;height:3.60px;background:#e0e0e0;border-radius:50%;"></div>
<div class="r" style="left:2093.20px;top:1693.00px;width:3.60px;height:3.60px;background:#e0e0e0;border-radius:50%;"></div>
<div class="r" style="left:2098.70px;top:1693.00px;width:3.60px;height:3.60px;background:#e0e0e0;border-radius:50%;"></div>
<div class="r" style="left:2135.50px;top:1693.70px;width:16.00px;height:1.80px;background:#e0e0e0;"></div>
<div class="r" style="left:2142.60px;top:1686.60px;width:1.80px;height:16.00px;background:#e0e0e0;"></div>
<div class="r" style="left:2190.00px;top:1686.80px;width:3.60px;height:3.60px;background:#e0e0e0;border-radius:50%;"></div>
<div class="r" style="left:2190.00px;top:1692.80px;width:3.60px;height:3.60px;background:#e0e0e0;border-radius:50%;"></div>
<div class="r" style="left:2190.00px;top:1698.80px;width:3.60px;height:3.60px;background:#e0e0e0;border-radius:50%;"></div>
<div class="r" style="left:2216.00px;top:1680.00px;width:643.00px;height:25.50px;background:#1c1c1c;border-radius:13px;"></div>
<svg class="r" style="left:2221px;top:1685px" width="16" height="16"><path d="M12 2 V14 L3 8 Z" fill="#9a9a9a" stroke="#9a9a9a" stroke-width="1.5" stroke-linejoin="round"/></svg>
<div class="r" style="left:2242.00px;top:1687.00px;width:537.00px;height:12.30px;background:#9a9a9a;border-radius:6px;"></div>
<svg class="r" style="left:2839px;top:1685px" width="16" height="16"><path d="M4 2 V14 L13 8 Z" fill="#9a9a9a" stroke="#9a9a9a" stroke-width="1.5" stroke-linejoin="round"/></svg>
<div class="r" style="left:11.00px;top:1718.30px;width:2880.00px;height:32.70px;background:#161616;"></div>
<div class="r" style="left:11.00px;top:1718.30px;width:2880.00px;height:1.00px;background:#2a2a2a;"></div>
<div class="t" style="top:1727.93px;font-size:15.8px;color:#e6e6e6;left:27.60px;">Ready</div>
<svg class="r" style="left:98px;top:1724px" width="25" height="24" viewBox="0 0 25 24">
<rect x="1" y="1" width="21" height="19" stroke="#e0e0e0" stroke-width="1.6" fill="none"/><path d="M1 5 H22 M4 9 H9 M4 13 H9 M4 17 H9" stroke="#e0e0e0" stroke-width="1.4"/>
<circle cx="16" cy="15" r="6.5" stroke="#e0e0e0" stroke-width="1.6" fill="#161616"/><circle cx="16" cy="15" r="3" fill="#e0e0e0"/></svg>
<svg class="r" style="left:145px;top:1723px" width="24" height="25" viewBox="0 0 24 25">
<circle cx="10" cy="3.5" r="2.5" stroke="#e0e0e0" stroke-width="1.5" fill="none"/>
<path d="M2 8 C6 9 14 9 18 8 M10 9 V15 L6 23 M10 15 L13 19" stroke="#e0e0e0" stroke-width="1.6" fill="none"/>
<path d="M14 17 L21 24 M21 17 L14 24" stroke="#e0e0e0" stroke-width="1.6"/></svg>
<div class="t" style="top:1727.50px;font-size:16.3px;color:#ffffff;font-weight:bold;left:173.50px;">Accessibility: Investigate</div>
<div class="r" style="left:2445.00px;top:1719.30px;width:59.70px;height:31.70px;background:#262626;"></div>
<svg class="r" style="left:2463px;top:1723px" width="24" height="24" viewBox="0 0 24 24">
<path d="M2 2 H22 V22 H2 Z M2 8.7 H22 M2 15.3 H22 M8.7 2 V22 M15.3 2 V22" stroke="#e6e6e6" stroke-width="1.7" fill="none"/></svg>
<svg class="r" style="left:2523px;top:1723px" width="24" height="24" viewBox="0 0 24 24">
<rect x="2" y="2" width="20" height="20" stroke="#e6e6e6" stroke-width="1.7" fill="none"/><rect x="6" y="5.5" width="12" height="13" stroke="#e6e6e6" stroke-width="1.4" fill="none"/>
<path d="M8.5 9 H15.5 M8.5 12 H15.5 M8.5 15 H15.5" stroke="#e6e6e6" stroke-width="1.3"/></svg>
<svg class="r" style="left:2583px;top:1723px" width="24" height="24" viewBox="0 0 24 24">
<path d="M2 2 H22 V22 H2 Z M2 16 H22 M7 2 V10 H14 V2" stroke="#e6e6e6" stroke-width="1.7" fill="none"/></svg>
<div class="r" style="left:2633.00px;top:1734.60px;width:13.00px;height:1.60px;background:#d0d0d0;"></div>
<div class="r" style="left:2653.00px;top:1734.80px;width:147.00px;height:1.10px;background:#9a9a9a;"></div>
<div class="r" style="left:2726.50px;top:1726.00px;width:8.00px;height:18.00px;background:#b0b0b0;border-radius:2px;"></div>
<div class="r" style="left:2807.00px;top:1734.60px;width:14.00px;height:1.60px;background:#d0d0d0;"></div>
<div class="r" style="left:2813.20px;top:1728.50px;width:1.60px;height:14.00px;background:#d0d0d0;"></div>
<div class="t" style="top:1727.83px;font-size:16.5px;color:#dcdcdc;left:1379.00px;width:1500px;text-align:right;">115%</div>
</body></html>
